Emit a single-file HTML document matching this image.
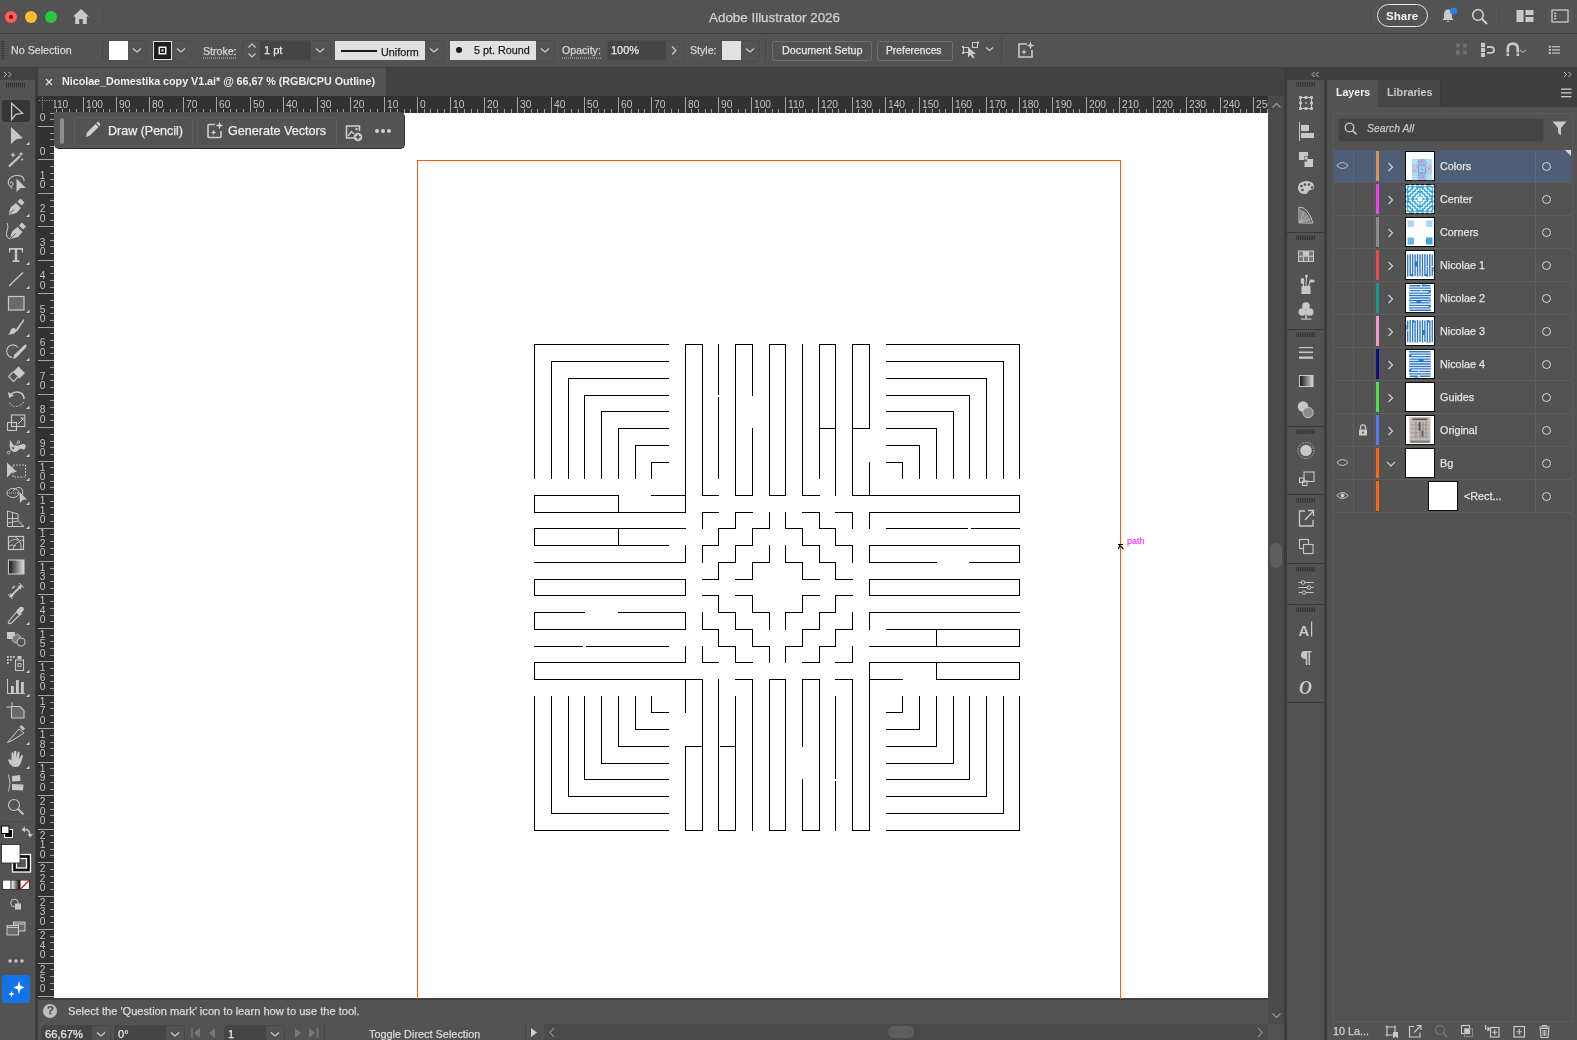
<!DOCTYPE html>
<html><head><meta charset="utf-8"><style>
html,body{margin:0;padding:0;}
body{width:1577px;height:1040px;overflow:hidden;position:relative;background:#535353;font-family:"Liberation Sans",sans-serif;}
body>div,body>svg{position:absolute;will-change:transform;}
.t{white-space:nowrap;line-height:1;-webkit-text-stroke:0.25px currentColor;}
</style></head><body>
<div style="left:0px;top:0px;width:1577px;height:33px;background:#535353;"></div>
<div style="left:0px;top:33px;width:1577px;height:1px;background:#3d3d3d;"></div>
<div style="left:0px;top:34px;width:1577px;height:33px;background:#535353;"></div>
<div style="left:0px;top:67px;width:1577px;height:1px;background:#3d3d3d;"></div>
<div style="left:0px;top:68px;width:35px;height:972px;background:#535353;"></div>
<div style="left:0px;top:68px;width:35px;height:12px;background:#424242;"></div>
<div style="left:35px;top:68px;width:3px;height:972px;background:#3f3f3f;"></div>
<div style="left:38px;top:68px;width:1246px;height:28px;background:#424242;"></div>
<div style="left:38px;top:68px;width:348px;height:28px;background:#535353;"></div>
<div style="left:36px;top:96px;width:1232px;height:17px;background:#323232;"></div>
<div style="left:36px;top:113px;width:18px;height:886px;background:#323232;"></div>
<div style="left:54px;top:113px;width:1214px;height:886px;background:#ffffff;"></div>
<div style="left:1268px;top:96px;width:16px;height:928px;background:#4a4a4a;"></div>
<div style="left:38px;top:998px;width:1230px;height:2px;background:#3f3f3f;"></div>
<div style="left:38px;top:1000px;width:1230px;height:24px;background:#535353;"></div>
<div style="left:544px;top:1024px;width:724px;height:16px;background:#4a4a4a;"></div>
<div style="left:324px;top:1024px;width:1px;height:16px;background:#474747;"></div>
<div style="left:525px;top:1024px;width:1px;height:16px;background:#474747;"></div>
<div style="left:1268px;top:1024px;width:16px;height:16px;background:#535353;"></div>
<div style="left:1284px;top:68px;width:3px;height:972px;background:#3b3b3b;"></div>
<div style="left:1287px;top:68px;width:290px;height:12px;background:#3e3e3e;"></div>
<div style="left:1287px;top:80px;width:37px;height:960px;background:#535353;"></div>
<div style="left:1324px;top:68px;width:3px;height:972px;background:#3b3b3b;"></div>
<div style="left:1327px;top:80px;width:250px;height:960px;background:#535353;"></div>
<div style="left:5px;top:11px;width:12px;height:12px;border-radius:6px;background:#ff5f57;"></div>
<div style="left:25px;top:11px;width:12px;height:12px;border-radius:6px;background:#febc2e;"></div>
<div style="left:45px;top:11px;width:12px;height:12px;border-radius:6px;background:#28c840;"></div>
<div style="left:9px;top:15px;width:4px;height:4px;border-radius:2px;background:#7a0000;"></div>
<svg style="left:72px;top:8px;" width="18" height="17" viewBox="0 0 18 17"><path d="M9 1 L1 8.5 L3.2 8.5 L3.2 16 L7.2 16 L7.2 11 L10.8 11 L10.8 16 L14.8 16 L14.8 8.5 L17 8.5 Z" fill="#c9c9c9"/></svg>
<div style="left:102px;top:7px;width:1px;height:19px;background:#4a4a4a;"></div>
<div class="t" style="left:709px;top:11px;font-size:13.4px;color:#d2d2d2;">Adobe Illustrator 2026</div>
<div style="left:1370px;top:5px;width:1px;height:22px;background:#4a4a4a;"></div>
<div style="left:1377px;top:4px;width:49px;height:21px;border:1.6px solid #e8e8e8;border-radius:12px;"></div>
<div class="t" style="left:1386px;top:10px;font-size:11.6px;color:#f0f0f0;font-weight:700;-webkit-text-stroke:0">Share</div>
<svg style="left:1441px;top:7px;" width="18" height="17" viewBox="0 0 18 17"><path d="M7 2.5 C4 2.5 3 5 3 8 L3 11 L1.5 13 L12.5 13 L11 11 L11 8 C11 5 10 2.5 7 2.5 Z" fill="#c9c9c9"/><path d="M5.5 14 Q7 16.5 8.5 14 Z" fill="#c9c9c9"/><circle cx="12.5" cy="4" r="3.6" fill="#2f7ff0"/></svg>
<svg style="left:1471px;top:8px;" width="18" height="18" viewBox="0 0 18 18"><circle cx="7" cy="7" r="5.3" fill="none" stroke="#c9c9c9" stroke-width="1.7"/><path d="M10.8 10.8 L16 16" stroke="#c9c9c9" stroke-width="2"/></svg>
<div style="left:1499px;top:6px;width:1px;height:20px;background:#4a4a4a;"></div>
<svg style="left:1516px;top:9px;" width="18" height="14" viewBox="0 0 18 14"><rect x="0.5" y="1" width="7" height="12" fill="#c9c9c9"/><rect x="9.5" y="1" width="8" height="5" fill="#c9c9c9"/><rect x="9.5" y="8" width="8" height="5" fill="#c9c9c9"/></svg>
<svg style="left:1551px;top:9px;" width="18" height="14" viewBox="0 0 18 14"><rect x="1" y="1" width="16" height="12" fill="none" stroke="#c9c9c9" stroke-width="1.3"/><rect x="3.2" y="3.5" width="2" height="1.6" fill="#c9c9c9"/><rect x="3.2" y="6.2" width="2" height="1.6" fill="#c9c9c9"/><rect x="3.2" y="8.9" width="2" height="1.6" fill="#c9c9c9"/></svg>
<svg style="left:1px;top:41px;" width="4" height="19" viewBox="0 0 4 19"><rect x="0" y="0.0" width="3.5" height="1" fill="#353535"/><rect x="0" y="2.3" width="3.5" height="1" fill="#353535"/><rect x="0" y="4.6" width="3.5" height="1" fill="#353535"/><rect x="0" y="6.9" width="3.5" height="1" fill="#353535"/><rect x="0" y="9.2" width="3.5" height="1" fill="#353535"/><rect x="0" y="11.5" width="3.5" height="1" fill="#353535"/><rect x="0" y="13.8" width="3.5" height="1" fill="#353535"/><rect x="0" y="16.1" width="3.5" height="1" fill="#353535"/><rect x="0" y="18.4" width="3.5" height="1" fill="#353535"/></svg>
<div class="t" style="left:11px;top:45px;font-size:10.7px;color:#d6d6d6;">No Selection</div>
<div style="left:102px;top:41px;width:1px;height:19px;background:#474747;"></div>
<div style="left:108px;top:40px;width:37px;height:20px;border:1px solid #4c4c4c;border-radius:3px;"></div>
<div style="left:109px;top:41px;width:19px;height:19px;background:#ffffff;"></div>
<svg style="left:132px;top:47px;" width="10" height="7" viewBox="0 0 10 7"><path d="M1 1.5 L5 4.9 L9 1.5" fill="none" stroke="#cfcfcf" stroke-width="1.2"/></svg>
<div style="left:152px;top:40px;width:37px;height:20px;border:1px solid #4c4c4c;border-radius:3px;"></div>
<div style="left:153px;top:41px;width:19px;height:19px;background:#1d1d1d;box-sizing:border-box;border:1px solid #e0e0e0;"></div>
<svg style="left:158px;top:46px;" width="9" height="9" viewBox="0 0 9 9"><rect x="1.25" y="1.25" width="6.5" height="6.5" fill="none" stroke="#f0f0f0" stroke-width="1.5"/><rect x="3.5" y="3.5" width="2" height="2" fill="#f0f0f0"/></svg>
<svg style="left:176px;top:47px;" width="10" height="7" viewBox="0 0 10 7"><path d="M1 1.5 L5 4.9 L9 1.5" fill="none" stroke="#cfcfcf" stroke-width="1.2"/></svg>
<div class="t" style="left:203px;top:46px;font-size:10.6px;color:#d6d6d6;">Stroke:</div>
<svg style="left:203px;top:57px;" width="34" height="2" viewBox="0 0 34 2"><path d="M0 1 L34 1" stroke="#bdbdbd" stroke-width="1" stroke-dasharray="1 1"/></svg>
<div style="left:242px;top:40px;width:87px;height:20px;border:1px solid #4c4c4c;border-radius:3px;"></div>
<div style="left:260px;top:41px;width:51px;height:19px;background:#454545;"></div>
<svg style="left:247px;top:42px;" width="10" height="17" viewBox="0 0 10 17"><path d="M1.5 5.5 L5 2 L8.5 5.5" fill="none" stroke="#cfcfcf" stroke-width="1.1"/><path d="M1.5 11.5 L5 15 L8.5 11.5" fill="none" stroke="#cfcfcf" stroke-width="1.1"/></svg>
<div class="t" style="left:264px;top:45px;font-size:11px;color:#e6e6e6;">1 pt</div>
<svg style="left:315px;top:47px;" width="10" height="7" viewBox="0 0 10 7"><path d="M1 1.5 L5 4.9 L9 1.5" fill="none" stroke="#cfcfcf" stroke-width="1.2"/></svg>
<div style="left:335px;top:41px;width:90px;height:19px;background:#e1e1e1;"></div>
<div style="left:341px;top:50px;width:36px;height:2px;background:#1a1a1a;"></div>
<div class="t" style="left:381px;top:46.5px;font-size:10.8px;color:#202020;">Uniform</div>
<div style="left:425px;top:40px;width:18px;height:20px;border:1px solid #4c4c4c;border-left:none;border-radius:0 3px 3px 0;"></div>
<svg style="left:429px;top:47px;" width="10" height="7" viewBox="0 0 10 7"><path d="M1 1.5 L5 4.9 L9 1.5" fill="none" stroke="#cfcfcf" stroke-width="1.2"/></svg>
<div style="left:450px;top:41px;width:86px;height:19px;background:#e1e1e1;"></div>
<div style="left:456px;top:47px;width:6px;height:6px;border-radius:3px;background:#1a1a1a"></div>
<div class="t" style="left:474px;top:45px;font-size:10.8px;color:#202020;">5 pt. Round</div>
<div style="left:536px;top:40px;width:18px;height:20px;border:1px solid #4c4c4c;border-left:none;border-radius:0 3px 3px 0;"></div>
<svg style="left:540px;top:47px;" width="10" height="7" viewBox="0 0 10 7"><path d="M1 1.5 L5 4.9 L9 1.5" fill="none" stroke="#cfcfcf" stroke-width="1.2"/></svg>
<div class="t" style="left:562px;top:45px;font-size:10.6px;color:#d6d6d6;">Opacity:</div>
<svg style="left:562px;top:57px;" width="39" height="2" viewBox="0 0 39 2"><path d="M0 1 L39 1" stroke="#bdbdbd" stroke-width="1" stroke-dasharray="1 1"/></svg>
<div style="left:607px;top:40px;width:76px;height:20px;border:1px solid #4c4c4c;border-radius:3px;"></div>
<div style="left:608px;top:41px;width:58px;height:19px;background:#454545;"></div>
<div class="t" style="left:611px;top:45px;font-size:11px;color:#e6e6e6;">100%</div>
<svg style="left:670px;top:45px;" width="8" height="11" viewBox="0 0 8 11"><path d="M2 1.5 L6 5.5 L2 9.5" fill="none" stroke="#cfcfcf" stroke-width="1.2"/></svg>
<div class="t" style="left:690px;top:45px;font-size:10.6px;color:#d6d6d6;">Style:</div>
<div style="left:721px;top:40px;width:37px;height:20px;border:1px solid #4c4c4c;border-radius:3px;"></div>
<div style="left:722px;top:41px;width:19px;height:19px;background:#e1e1e1;"></div>
<svg style="left:745px;top:47px;" width="10" height="7" viewBox="0 0 10 7"><path d="M1 1.5 L5 4.9 L9 1.5" fill="none" stroke="#cfcfcf" stroke-width="1.2"/></svg>
<div style="left:765px;top:38px;width:1px;height:24px;background:#474747;"></div>
<div style="left:772px;top:41px;width:98px;height:18px;border:1px solid #6e6e6e;border-radius:2px;"></div>
<div class="t" style="left:782px;top:45px;font-size:10.8px;color:#e6e6e6;">Document Setup</div>
<div style="left:877px;top:41px;width:74px;height:18px;border:1px solid #6e6e6e;border-radius:2px;"></div>
<div class="t" style="left:886px;top:46px;font-size:10.3px;color:#e6e6e6;">Preferences</div>
<svg style="left:961px;top:41px;" width="20" height="18" viewBox="0 0 20 18"><rect x="2.5" y="6.5" width="5" height="5" fill="none" stroke="#c9c9c9" stroke-width="1"/><rect x="1" y="5" width="2" height="2" fill="#c9c9c9"/><rect x="1" y="11" width="2" height="2" fill="#c9c9c9"/><rect x="11.5" y="1.5" width="5" height="5" fill="none" stroke="#c9c9c9" stroke-width="1"/><rect x="16" y="0.5" width="2" height="2" fill="#c9c9c9"/><path d="M7 6 L7 16.5 L9.5 14 L12 17.5 L13.5 16.5 L11.3 13 L15 13 Z" fill="#c9c9c9"/></svg>
<svg style="left:984.5px;top:46px;" width="9.0" height="7" viewBox="0 0 9.0 7"><path d="M1 1.5 L4.5 4.475 L8.0 1.5" fill="none" stroke="#c9c9c9" stroke-width="1.2"/></svg>
<div style="left:1001px;top:36px;width:1px;height:27px;background:#474747;"></div>
<svg style="left:1017px;top:41px;" width="18" height="18" viewBox="0 0 18 18"><path d="M10 3 L2 3 L2 16 L15 16 L15 9" fill="none" stroke="#c9c9c9" stroke-width="1.6"/><path d="M13.5 0.5 L14.6 3.4 L17.5 4.5 L14.6 5.6 L13.5 8.5 L12.4 5.6 L9.5 4.5 L12.4 3.4 Z" fill="#c9c9c9"/><path d="M7 8 L7.8 10.2 L10 11 L7.8 11.8 L7 14 L6.2 11.8 L4 11 L6.2 10.2 Z" fill="#c9c9c9"/></svg>
<svg style="left:1454px;top:41px;" width="16" height="16" viewBox="0 0 16 16"><path d="M7.5 1 V15.5 M0.5 8.5 H15.5" stroke="#5c5c5c" stroke-width="0.8"/><rect x="2" y="2.5" width="4" height="4" fill="#6e6e6e"/><rect x="2" y="9.5" width="4" height="4" fill="#6e6e6e"/><rect x="9" y="2.5" width="4" height="4" fill="#6e6e6e"/><rect x="9" y="9.5" width="4" height="4" fill="#6e6e6e"/></svg>
<svg style="left:1480px;top:42px;" width="17" height="16" viewBox="0 0 17 16"><rect x="1" y="0.8" width="4" height="4.2" fill="#c9c9c9"/><rect x="1" y="5.8" width="4" height="4.2" fill="#c9c9c9"/><rect x="1" y="10.8" width="4" height="4.2" fill="#c9c9c9"/><path d="M7 5 H11 Q14 5 14 7.9 Q14 10.8 11 10.8 H7" fill="none" stroke="#c9c9c9" stroke-width="1.8"/><rect x="6.5" y="6.7" width="2" height="2.3" fill="#535353"/></svg>
<svg style="left:1505px;top:42px;" width="24" height="16" viewBox="0 0 24 16"><path d="M2.8 14 V7 Q2.8 1.6 7.8 1.6 Q12.8 1.6 12.8 7 V14" fill="none" stroke="#c9c9c9" stroke-width="2.6"/><rect x="1" y="10.5" width="3.8" height="0.9" fill="#535353"/><rect x="10.8" y="10.5" width="3.8" height="0.9" fill="#535353"/><path d="M15 7.8 L18 10.5 L21 7.8" fill="none" stroke="#c9c9c9" stroke-width="1"/></svg>
<svg style="left:1548px;top:45px;" width="13" height="10" viewBox="0 0 13 10"><rect x="0.8" y="0.7" width="2" height="2" fill="#c9c9c9"/><rect x="0.8" y="3.9" width="2" height="2" fill="#c9c9c9"/><rect x="0.8" y="7.1" width="2" height="2" fill="#c9c9c9"/><rect x="4" y="1.1" width="8" height="1.2" fill="#c9c9c9"/><rect x="4" y="4.3" width="8" height="1.2" fill="#c9c9c9"/><rect x="4" y="7.5" width="8" height="1.2" fill="#c9c9c9"/></svg>
<svg style="left:45px;top:78px;" width="8" height="8" viewBox="0 0 8 8"><path d="M1 1 L7 7 M7 1 L1 7" stroke="#e0e0e0" stroke-width="1.3"/></svg>
<div class="t" style="left:62px;top:76px;font-size:10.8px;color:#ececec;font-weight:700;letter-spacing:-0.05px;-webkit-text-stroke:0">Nicolae_Domestika copy V1.ai* @ 66,67 % (RGB/CPU Outline)</div>
<svg style="left:3px;top:71px;" width="10" height="7" viewBox="0 0 10 7"><path d="M1 1 L3.5 3.5 L1 6 M5.5 1 L8 3.5 L5.5 6" fill="none" stroke="#bdbdbd" stroke-width="1"/></svg>
<svg style="left:6px;top:83px;" width="20" height="5" viewBox="0 0 20 5"><rect x="0" y="0" width="1" height="4.5" fill="#2f2f2f"/><rect x="2" y="0" width="1" height="4.5" fill="#2f2f2f"/><rect x="4" y="0" width="1" height="4.5" fill="#2f2f2f"/><rect x="6" y="0" width="1" height="4.5" fill="#2f2f2f"/><rect x="8" y="0" width="1" height="4.5" fill="#2f2f2f"/><rect x="10" y="0" width="1" height="4.5" fill="#2f2f2f"/><rect x="12" y="0" width="1" height="4.5" fill="#2f2f2f"/><rect x="14" y="0" width="1" height="4.5" fill="#2f2f2f"/><rect x="16" y="0" width="1" height="4.5" fill="#2f2f2f"/><rect x="18" y="0" width="1" height="4.5" fill="#2f2f2f"/></svg>
<svg style="left:54px;top:96px;overflow:hidden" width="1214" height="17" viewBox="0 0 1214 17"><rect x="-12" y="13" width="1" height="4" fill="#a0a0a0"/><rect x="-5" y="1" width="1" height="16" fill="#a6a6a6"/><text x="-2" y="12" font-size="10.2" fill="#c4c4c4" font-family="Liberation Sans">110</text><rect x="2" y="13" width="1" height="4" fill="#a0a0a0"/><rect x="8" y="13" width="1" height="4" fill="#a0a0a0"/><rect x="15" y="13" width="1" height="4" fill="#a0a0a0"/><rect x="22" y="13" width="1" height="4" fill="#a0a0a0"/><rect x="29" y="1" width="1" height="16" fill="#a6a6a6"/><text x="32" y="12" font-size="10.2" fill="#c4c4c4" font-family="Liberation Sans">100</text><rect x="35" y="13" width="1" height="4" fill="#a0a0a0"/><rect x="42" y="13" width="1" height="4" fill="#a0a0a0"/><rect x="49" y="13" width="1" height="4" fill="#a0a0a0"/><rect x="55" y="13" width="1" height="4" fill="#a0a0a0"/><rect x="62" y="1" width="1" height="16" fill="#a6a6a6"/><text x="65" y="12" font-size="10.2" fill="#c4c4c4" font-family="Liberation Sans">90</text><rect x="69" y="13" width="1" height="4" fill="#a0a0a0"/><rect x="75" y="13" width="1" height="4" fill="#a0a0a0"/><rect x="82" y="13" width="1" height="4" fill="#a0a0a0"/><rect x="89" y="13" width="1" height="4" fill="#a0a0a0"/><rect x="95" y="1" width="1" height="16" fill="#a6a6a6"/><text x="98" y="12" font-size="10.2" fill="#c4c4c4" font-family="Liberation Sans">80</text><rect x="102" y="13" width="1" height="4" fill="#a0a0a0"/><rect x="109" y="13" width="1" height="4" fill="#a0a0a0"/><rect x="116" y="13" width="1" height="4" fill="#a0a0a0"/><rect x="122" y="13" width="1" height="4" fill="#a0a0a0"/><rect x="129" y="1" width="1" height="16" fill="#a6a6a6"/><text x="132" y="12" font-size="10.2" fill="#c4c4c4" font-family="Liberation Sans">70</text><rect x="136" y="13" width="1" height="4" fill="#a0a0a0"/><rect x="142" y="13" width="1" height="4" fill="#a0a0a0"/><rect x="149" y="13" width="1" height="4" fill="#a0a0a0"/><rect x="156" y="13" width="1" height="4" fill="#a0a0a0"/><rect x="162" y="1" width="1" height="16" fill="#a6a6a6"/><text x="165" y="12" font-size="10.2" fill="#c4c4c4" font-family="Liberation Sans">60</text><rect x="169" y="13" width="1" height="4" fill="#a0a0a0"/><rect x="176" y="13" width="1" height="4" fill="#a0a0a0"/><rect x="182" y="13" width="1" height="4" fill="#a0a0a0"/><rect x="189" y="13" width="1" height="4" fill="#a0a0a0"/><rect x="196" y="1" width="1" height="16" fill="#a6a6a6"/><text x="199" y="12" font-size="10.2" fill="#c4c4c4" font-family="Liberation Sans">50</text><rect x="202" y="13" width="1" height="4" fill="#a0a0a0"/><rect x="209" y="13" width="1" height="4" fill="#a0a0a0"/><rect x="216" y="13" width="1" height="4" fill="#a0a0a0"/><rect x="223" y="13" width="1" height="4" fill="#a0a0a0"/><rect x="229" y="1" width="1" height="16" fill="#a6a6a6"/><text x="232" y="12" font-size="10.2" fill="#c4c4c4" font-family="Liberation Sans">40</text><rect x="236" y="13" width="1" height="4" fill="#a0a0a0"/><rect x="243" y="13" width="1" height="4" fill="#a0a0a0"/><rect x="249" y="13" width="1" height="4" fill="#a0a0a0"/><rect x="256" y="13" width="1" height="4" fill="#a0a0a0"/><rect x="263" y="1" width="1" height="16" fill="#a6a6a6"/><text x="266" y="12" font-size="10.2" fill="#c4c4c4" font-family="Liberation Sans">30</text><rect x="269" y="13" width="1" height="4" fill="#a0a0a0"/><rect x="276" y="13" width="1" height="4" fill="#a0a0a0"/><rect x="283" y="13" width="1" height="4" fill="#a0a0a0"/><rect x="289" y="13" width="1" height="4" fill="#a0a0a0"/><rect x="296" y="1" width="1" height="16" fill="#a6a6a6"/><text x="299" y="12" font-size="10.2" fill="#c4c4c4" font-family="Liberation Sans">20</text><rect x="303" y="13" width="1" height="4" fill="#a0a0a0"/><rect x="309" y="13" width="1" height="4" fill="#a0a0a0"/><rect x="316" y="13" width="1" height="4" fill="#a0a0a0"/><rect x="323" y="13" width="1" height="4" fill="#a0a0a0"/><rect x="330" y="1" width="1" height="16" fill="#a6a6a6"/><text x="333" y="12" font-size="10.2" fill="#c4c4c4" font-family="Liberation Sans">10</text><rect x="336" y="13" width="1" height="4" fill="#a0a0a0"/><rect x="343" y="13" width="1" height="4" fill="#a0a0a0"/><rect x="350" y="13" width="1" height="4" fill="#a0a0a0"/><rect x="356" y="13" width="1" height="4" fill="#a0a0a0"/><rect x="363" y="1" width="1" height="16" fill="#a6a6a6"/><text x="366" y="12" font-size="10.2" fill="#c4c4c4" font-family="Liberation Sans">0</text><rect x="370" y="13" width="1" height="4" fill="#a0a0a0"/><rect x="376" y="13" width="1" height="4" fill="#a0a0a0"/><rect x="383" y="13" width="1" height="4" fill="#a0a0a0"/><rect x="390" y="13" width="1" height="4" fill="#a0a0a0"/><rect x="396" y="1" width="1" height="16" fill="#a6a6a6"/><text x="399" y="12" font-size="10.2" fill="#c4c4c4" font-family="Liberation Sans">10</text><rect x="403" y="13" width="1" height="4" fill="#a0a0a0"/><rect x="410" y="13" width="1" height="4" fill="#a0a0a0"/><rect x="417" y="13" width="1" height="4" fill="#a0a0a0"/><rect x="423" y="13" width="1" height="4" fill="#a0a0a0"/><rect x="430" y="1" width="1" height="16" fill="#a6a6a6"/><text x="433" y="12" font-size="10.2" fill="#c4c4c4" font-family="Liberation Sans">20</text><rect x="437" y="13" width="1" height="4" fill="#a0a0a0"/><rect x="443" y="13" width="1" height="4" fill="#a0a0a0"/><rect x="450" y="13" width="1" height="4" fill="#a0a0a0"/><rect x="457" y="13" width="1" height="4" fill="#a0a0a0"/><rect x="463" y="1" width="1" height="16" fill="#a6a6a6"/><text x="466" y="12" font-size="10.2" fill="#c4c4c4" font-family="Liberation Sans">30</text><rect x="470" y="13" width="1" height="4" fill="#a0a0a0"/><rect x="477" y="13" width="1" height="4" fill="#a0a0a0"/><rect x="483" y="13" width="1" height="4" fill="#a0a0a0"/><rect x="490" y="13" width="1" height="4" fill="#a0a0a0"/><rect x="497" y="1" width="1" height="16" fill="#a6a6a6"/><text x="500" y="12" font-size="10.2" fill="#c4c4c4" font-family="Liberation Sans">40</text><rect x="503" y="13" width="1" height="4" fill="#a0a0a0"/><rect x="510" y="13" width="1" height="4" fill="#a0a0a0"/><rect x="517" y="13" width="1" height="4" fill="#a0a0a0"/><rect x="524" y="13" width="1" height="4" fill="#a0a0a0"/><rect x="530" y="1" width="1" height="16" fill="#a6a6a6"/><text x="533" y="12" font-size="10.2" fill="#c4c4c4" font-family="Liberation Sans">50</text><rect x="537" y="13" width="1" height="4" fill="#a0a0a0"/><rect x="544" y="13" width="1" height="4" fill="#a0a0a0"/><rect x="550" y="13" width="1" height="4" fill="#a0a0a0"/><rect x="557" y="13" width="1" height="4" fill="#a0a0a0"/><rect x="564" y="1" width="1" height="16" fill="#a6a6a6"/><text x="567" y="12" font-size="10.2" fill="#c4c4c4" font-family="Liberation Sans">60</text><rect x="570" y="13" width="1" height="4" fill="#a0a0a0"/><rect x="577" y="13" width="1" height="4" fill="#a0a0a0"/><rect x="584" y="13" width="1" height="4" fill="#a0a0a0"/><rect x="590" y="13" width="1" height="4" fill="#a0a0a0"/><rect x="597" y="1" width="1" height="16" fill="#a6a6a6"/><text x="600" y="12" font-size="10.2" fill="#c4c4c4" font-family="Liberation Sans">70</text><rect x="604" y="13" width="1" height="4" fill="#a0a0a0"/><rect x="610" y="13" width="1" height="4" fill="#a0a0a0"/><rect x="617" y="13" width="1" height="4" fill="#a0a0a0"/><rect x="624" y="13" width="1" height="4" fill="#a0a0a0"/><rect x="631" y="1" width="1" height="16" fill="#a6a6a6"/><text x="634" y="12" font-size="10.2" fill="#c4c4c4" font-family="Liberation Sans">80</text><rect x="637" y="13" width="1" height="4" fill="#a0a0a0"/><rect x="644" y="13" width="1" height="4" fill="#a0a0a0"/><rect x="651" y="13" width="1" height="4" fill="#a0a0a0"/><rect x="657" y="13" width="1" height="4" fill="#a0a0a0"/><rect x="664" y="1" width="1" height="16" fill="#a6a6a6"/><text x="667" y="12" font-size="10.2" fill="#c4c4c4" font-family="Liberation Sans">90</text><rect x="671" y="13" width="1" height="4" fill="#a0a0a0"/><rect x="677" y="13" width="1" height="4" fill="#a0a0a0"/><rect x="684" y="13" width="1" height="4" fill="#a0a0a0"/><rect x="691" y="13" width="1" height="4" fill="#a0a0a0"/><rect x="697" y="1" width="1" height="16" fill="#a6a6a6"/><text x="700" y="12" font-size="10.2" fill="#c4c4c4" font-family="Liberation Sans">100</text><rect x="704" y="13" width="1" height="4" fill="#a0a0a0"/><rect x="711" y="13" width="1" height="4" fill="#a0a0a0"/><rect x="718" y="13" width="1" height="4" fill="#a0a0a0"/><rect x="724" y="13" width="1" height="4" fill="#a0a0a0"/><rect x="731" y="1" width="1" height="16" fill="#a6a6a6"/><text x="734" y="12" font-size="10.2" fill="#c4c4c4" font-family="Liberation Sans">110</text><rect x="738" y="13" width="1" height="4" fill="#a0a0a0"/><rect x="744" y="13" width="1" height="4" fill="#a0a0a0"/><rect x="751" y="13" width="1" height="4" fill="#a0a0a0"/><rect x="758" y="13" width="1" height="4" fill="#a0a0a0"/><rect x="764" y="1" width="1" height="16" fill="#a6a6a6"/><text x="767" y="12" font-size="10.2" fill="#c4c4c4" font-family="Liberation Sans">120</text><rect x="771" y="13" width="1" height="4" fill="#a0a0a0"/><rect x="778" y="13" width="1" height="4" fill="#a0a0a0"/><rect x="784" y="13" width="1" height="4" fill="#a0a0a0"/><rect x="791" y="13" width="1" height="4" fill="#a0a0a0"/><rect x="798" y="1" width="1" height="16" fill="#a6a6a6"/><text x="801" y="12" font-size="10.2" fill="#c4c4c4" font-family="Liberation Sans">130</text><rect x="804" y="13" width="1" height="4" fill="#a0a0a0"/><rect x="811" y="13" width="1" height="4" fill="#a0a0a0"/><rect x="818" y="13" width="1" height="4" fill="#a0a0a0"/><rect x="825" y="13" width="1" height="4" fill="#a0a0a0"/><rect x="831" y="1" width="1" height="16" fill="#a6a6a6"/><text x="834" y="12" font-size="10.2" fill="#c4c4c4" font-family="Liberation Sans">140</text><rect x="838" y="13" width="1" height="4" fill="#a0a0a0"/><rect x="845" y="13" width="1" height="4" fill="#a0a0a0"/><rect x="851" y="13" width="1" height="4" fill="#a0a0a0"/><rect x="858" y="13" width="1" height="4" fill="#a0a0a0"/><rect x="865" y="1" width="1" height="16" fill="#a6a6a6"/><text x="868" y="12" font-size="10.2" fill="#c4c4c4" font-family="Liberation Sans">150</text><rect x="871" y="13" width="1" height="4" fill="#a0a0a0"/><rect x="878" y="13" width="1" height="4" fill="#a0a0a0"/><rect x="885" y="13" width="1" height="4" fill="#a0a0a0"/><rect x="891" y="13" width="1" height="4" fill="#a0a0a0"/><rect x="898" y="1" width="1" height="16" fill="#a6a6a6"/><text x="901" y="12" font-size="10.2" fill="#c4c4c4" font-family="Liberation Sans">160</text><rect x="905" y="13" width="1" height="4" fill="#a0a0a0"/><rect x="911" y="13" width="1" height="4" fill="#a0a0a0"/><rect x="918" y="13" width="1" height="4" fill="#a0a0a0"/><rect x="925" y="13" width="1" height="4" fill="#a0a0a0"/><rect x="932" y="1" width="1" height="16" fill="#a6a6a6"/><text x="935" y="12" font-size="10.2" fill="#c4c4c4" font-family="Liberation Sans">170</text><rect x="938" y="13" width="1" height="4" fill="#a0a0a0"/><rect x="945" y="13" width="1" height="4" fill="#a0a0a0"/><rect x="952" y="13" width="1" height="4" fill="#a0a0a0"/><rect x="958" y="13" width="1" height="4" fill="#a0a0a0"/><rect x="965" y="1" width="1" height="16" fill="#a6a6a6"/><text x="968" y="12" font-size="10.2" fill="#c4c4c4" font-family="Liberation Sans">180</text><rect x="972" y="13" width="1" height="4" fill="#a0a0a0"/><rect x="978" y="13" width="1" height="4" fill="#a0a0a0"/><rect x="985" y="13" width="1" height="4" fill="#a0a0a0"/><rect x="992" y="13" width="1" height="4" fill="#a0a0a0"/><rect x="998" y="1" width="1" height="16" fill="#a6a6a6"/><text x="1001" y="12" font-size="10.2" fill="#c4c4c4" font-family="Liberation Sans">190</text><rect x="1005" y="13" width="1" height="4" fill="#a0a0a0"/><rect x="1012" y="13" width="1" height="4" fill="#a0a0a0"/><rect x="1019" y="13" width="1" height="4" fill="#a0a0a0"/><rect x="1025" y="13" width="1" height="4" fill="#a0a0a0"/><rect x="1032" y="1" width="1" height="16" fill="#a6a6a6"/><text x="1035" y="12" font-size="10.2" fill="#c4c4c4" font-family="Liberation Sans">200</text><rect x="1039" y="13" width="1" height="4" fill="#a0a0a0"/><rect x="1045" y="13" width="1" height="4" fill="#a0a0a0"/><rect x="1052" y="13" width="1" height="4" fill="#a0a0a0"/><rect x="1059" y="13" width="1" height="4" fill="#a0a0a0"/><rect x="1065" y="1" width="1" height="16" fill="#a6a6a6"/><text x="1068" y="12" font-size="10.2" fill="#c4c4c4" font-family="Liberation Sans">210</text><rect x="1072" y="13" width="1" height="4" fill="#a0a0a0"/><rect x="1079" y="13" width="1" height="4" fill="#a0a0a0"/><rect x="1085" y="13" width="1" height="4" fill="#a0a0a0"/><rect x="1092" y="13" width="1" height="4" fill="#a0a0a0"/><rect x="1099" y="1" width="1" height="16" fill="#a6a6a6"/><text x="1102" y="12" font-size="10.2" fill="#c4c4c4" font-family="Liberation Sans">220</text><rect x="1105" y="13" width="1" height="4" fill="#a0a0a0"/><rect x="1112" y="13" width="1" height="4" fill="#a0a0a0"/><rect x="1119" y="13" width="1" height="4" fill="#a0a0a0"/><rect x="1126" y="13" width="1" height="4" fill="#a0a0a0"/><rect x="1132" y="1" width="1" height="16" fill="#a6a6a6"/><text x="1135" y="12" font-size="10.2" fill="#c4c4c4" font-family="Liberation Sans">230</text><rect x="1139" y="13" width="1" height="4" fill="#a0a0a0"/><rect x="1146" y="13" width="1" height="4" fill="#a0a0a0"/><rect x="1152" y="13" width="1" height="4" fill="#a0a0a0"/><rect x="1159" y="13" width="1" height="4" fill="#a0a0a0"/><rect x="1166" y="1" width="1" height="16" fill="#a6a6a6"/><text x="1169" y="12" font-size="10.2" fill="#c4c4c4" font-family="Liberation Sans">240</text><rect x="1172" y="13" width="1" height="4" fill="#a0a0a0"/><rect x="1179" y="13" width="1" height="4" fill="#a0a0a0"/><rect x="1186" y="13" width="1" height="4" fill="#a0a0a0"/><rect x="1192" y="13" width="1" height="4" fill="#a0a0a0"/><rect x="1199" y="1" width="1" height="16" fill="#a6a6a6"/><text x="1202" y="12" font-size="10.2" fill="#c4c4c4" font-family="Liberation Sans">250</text><rect x="1206" y="13" width="1" height="4" fill="#a0a0a0"/><rect x="1213" y="13" width="1" height="4" fill="#a0a0a0"/></svg>
<svg style="left:36px;top:113px;overflow:hidden" width="18" height="885" viewBox="0 0 18 885"><rect x="2" y="-21" width="16" height="1" fill="#a6a6a6"/><text x="6.5" y="-34.53" font-size="10.2" fill="#c4c4c4" text-anchor="middle" font-family="Liberation Sans">2</text><text x="6.5" y="-25.03" font-size="10.2" fill="#c4c4c4" text-anchor="middle" font-family="Liberation Sans">0</text><rect x="14" y="-14" width="4" height="1" fill="#a0a0a0"/><rect x="14" y="-7" width="4" height="1" fill="#a0a0a0"/><rect x="14" y="0" width="4" height="1" fill="#a0a0a0"/><rect x="14" y="6" width="4" height="1" fill="#a0a0a0"/><rect x="2" y="13" width="16" height="1" fill="#a6a6a6"/><text x="6.5" y="-1.06" font-size="10.2" fill="#c4c4c4" text-anchor="middle" font-family="Liberation Sans">1</text><text x="6.5" y="8.44" font-size="10.2" fill="#c4c4c4" text-anchor="middle" font-family="Liberation Sans">0</text><rect x="14" y="20" width="4" height="1" fill="#a0a0a0"/><rect x="14" y="26" width="4" height="1" fill="#a0a0a0"/><rect x="14" y="33" width="4" height="1" fill="#a0a0a0"/><rect x="14" y="40" width="4" height="1" fill="#a0a0a0"/><rect x="2" y="46" width="16" height="1" fill="#a6a6a6"/><text x="6.5" y="41.90" font-size="10.2" fill="#c4c4c4" text-anchor="middle" font-family="Liberation Sans">0</text><rect x="14" y="53" width="4" height="1" fill="#a0a0a0"/><rect x="14" y="60" width="4" height="1" fill="#a0a0a0"/><rect x="14" y="66" width="4" height="1" fill="#a0a0a0"/><rect x="14" y="73" width="4" height="1" fill="#a0a0a0"/><rect x="2" y="80" width="16" height="1" fill="#a6a6a6"/><text x="6.5" y="65.87" font-size="10.2" fill="#c4c4c4" text-anchor="middle" font-family="Liberation Sans">1</text><text x="6.5" y="75.37" font-size="10.2" fill="#c4c4c4" text-anchor="middle" font-family="Liberation Sans">0</text><rect x="14" y="87" width="4" height="1" fill="#a0a0a0"/><rect x="14" y="93" width="4" height="1" fill="#a0a0a0"/><rect x="14" y="100" width="4" height="1" fill="#a0a0a0"/><rect x="14" y="107" width="4" height="1" fill="#a0a0a0"/><rect x="2" y="113" width="16" height="1" fill="#a6a6a6"/><text x="6.5" y="99.33" font-size="10.2" fill="#c4c4c4" text-anchor="middle" font-family="Liberation Sans">2</text><text x="6.5" y="108.83" font-size="10.2" fill="#c4c4c4" text-anchor="middle" font-family="Liberation Sans">0</text><rect x="14" y="120" width="4" height="1" fill="#a0a0a0"/><rect x="14" y="127" width="4" height="1" fill="#a0a0a0"/><rect x="14" y="133" width="4" height="1" fill="#a0a0a0"/><rect x="14" y="140" width="4" height="1" fill="#a0a0a0"/><rect x="2" y="147" width="16" height="1" fill="#a6a6a6"/><text x="6.5" y="132.80" font-size="10.2" fill="#c4c4c4" text-anchor="middle" font-family="Liberation Sans">3</text><text x="6.5" y="142.30" font-size="10.2" fill="#c4c4c4" text-anchor="middle" font-family="Liberation Sans">0</text><rect x="14" y="153" width="4" height="1" fill="#a0a0a0"/><rect x="14" y="160" width="4" height="1" fill="#a0a0a0"/><rect x="14" y="167" width="4" height="1" fill="#a0a0a0"/><rect x="14" y="174" width="4" height="1" fill="#a0a0a0"/><rect x="2" y="180" width="16" height="1" fill="#a6a6a6"/><text x="6.5" y="166.26" font-size="10.2" fill="#c4c4c4" text-anchor="middle" font-family="Liberation Sans">4</text><text x="6.5" y="175.76" font-size="10.2" fill="#c4c4c4" text-anchor="middle" font-family="Liberation Sans">0</text><rect x="14" y="187" width="4" height="1" fill="#a0a0a0"/><rect x="14" y="194" width="4" height="1" fill="#a0a0a0"/><rect x="14" y="200" width="4" height="1" fill="#a0a0a0"/><rect x="14" y="207" width="4" height="1" fill="#a0a0a0"/><rect x="2" y="214" width="16" height="1" fill="#a6a6a6"/><text x="6.5" y="199.73" font-size="10.2" fill="#c4c4c4" text-anchor="middle" font-family="Liberation Sans">5</text><text x="6.5" y="209.23" font-size="10.2" fill="#c4c4c4" text-anchor="middle" font-family="Liberation Sans">0</text><rect x="14" y="220" width="4" height="1" fill="#a0a0a0"/><rect x="14" y="227" width="4" height="1" fill="#a0a0a0"/><rect x="14" y="234" width="4" height="1" fill="#a0a0a0"/><rect x="14" y="240" width="4" height="1" fill="#a0a0a0"/><rect x="2" y="247" width="16" height="1" fill="#a6a6a6"/><text x="6.5" y="233.19" font-size="10.2" fill="#c4c4c4" text-anchor="middle" font-family="Liberation Sans">6</text><text x="6.5" y="242.69" font-size="10.2" fill="#c4c4c4" text-anchor="middle" font-family="Liberation Sans">0</text><rect x="14" y="254" width="4" height="1" fill="#a0a0a0"/><rect x="14" y="261" width="4" height="1" fill="#a0a0a0"/><rect x="14" y="267" width="4" height="1" fill="#a0a0a0"/><rect x="14" y="274" width="4" height="1" fill="#a0a0a0"/><rect x="2" y="281" width="16" height="1" fill="#a6a6a6"/><text x="6.5" y="266.65" font-size="10.2" fill="#c4c4c4" text-anchor="middle" font-family="Liberation Sans">7</text><text x="6.5" y="276.15" font-size="10.2" fill="#c4c4c4" text-anchor="middle" font-family="Liberation Sans">0</text><rect x="14" y="287" width="4" height="1" fill="#a0a0a0"/><rect x="14" y="294" width="4" height="1" fill="#a0a0a0"/><rect x="14" y="301" width="4" height="1" fill="#a0a0a0"/><rect x="14" y="307" width="4" height="1" fill="#a0a0a0"/><rect x="2" y="314" width="16" height="1" fill="#a6a6a6"/><text x="6.5" y="300.12" font-size="10.2" fill="#c4c4c4" text-anchor="middle" font-family="Liberation Sans">8</text><text x="6.5" y="309.62" font-size="10.2" fill="#c4c4c4" text-anchor="middle" font-family="Liberation Sans">0</text><rect x="14" y="321" width="4" height="1" fill="#a0a0a0"/><rect x="14" y="328" width="4" height="1" fill="#a0a0a0"/><rect x="14" y="334" width="4" height="1" fill="#a0a0a0"/><rect x="14" y="341" width="4" height="1" fill="#a0a0a0"/><rect x="2" y="348" width="16" height="1" fill="#a6a6a6"/><text x="6.5" y="333.59" font-size="10.2" fill="#c4c4c4" text-anchor="middle" font-family="Liberation Sans">9</text><text x="6.5" y="343.09" font-size="10.2" fill="#c4c4c4" text-anchor="middle" font-family="Liberation Sans">0</text><rect x="14" y="354" width="4" height="1" fill="#a0a0a0"/><rect x="14" y="361" width="4" height="1" fill="#a0a0a0"/><rect x="14" y="368" width="4" height="1" fill="#a0a0a0"/><rect x="14" y="374" width="4" height="1" fill="#a0a0a0"/><rect x="2" y="381" width="16" height="1" fill="#a6a6a6"/><text x="6.5" y="357.55" font-size="10.2" fill="#c4c4c4" text-anchor="middle" font-family="Liberation Sans">1</text><text x="6.5" y="367.05" font-size="10.2" fill="#c4c4c4" text-anchor="middle" font-family="Liberation Sans">0</text><text x="6.5" y="376.55" font-size="10.2" fill="#c4c4c4" text-anchor="middle" font-family="Liberation Sans">0</text><rect x="14" y="388" width="4" height="1" fill="#a0a0a0"/><rect x="14" y="394" width="4" height="1" fill="#a0a0a0"/><rect x="14" y="401" width="4" height="1" fill="#a0a0a0"/><rect x="14" y="408" width="4" height="1" fill="#a0a0a0"/><rect x="2" y="415" width="16" height="1" fill="#a6a6a6"/><text x="6.5" y="391.01" font-size="10.2" fill="#c4c4c4" text-anchor="middle" font-family="Liberation Sans">1</text><text x="6.5" y="400.51" font-size="10.2" fill="#c4c4c4" text-anchor="middle" font-family="Liberation Sans">1</text><text x="6.5" y="410.01" font-size="10.2" fill="#c4c4c4" text-anchor="middle" font-family="Liberation Sans">0</text><rect x="14" y="421" width="4" height="1" fill="#a0a0a0"/><rect x="14" y="428" width="4" height="1" fill="#a0a0a0"/><rect x="14" y="435" width="4" height="1" fill="#a0a0a0"/><rect x="14" y="441" width="4" height="1" fill="#a0a0a0"/><rect x="2" y="448" width="16" height="1" fill="#a6a6a6"/><text x="6.5" y="424.48" font-size="10.2" fill="#c4c4c4" text-anchor="middle" font-family="Liberation Sans">1</text><text x="6.5" y="433.98" font-size="10.2" fill="#c4c4c4" text-anchor="middle" font-family="Liberation Sans">2</text><text x="6.5" y="443.48" font-size="10.2" fill="#c4c4c4" text-anchor="middle" font-family="Liberation Sans">0</text><rect x="14" y="455" width="4" height="1" fill="#a0a0a0"/><rect x="14" y="461" width="4" height="1" fill="#a0a0a0"/><rect x="14" y="468" width="4" height="1" fill="#a0a0a0"/><rect x="14" y="475" width="4" height="1" fill="#a0a0a0"/><rect x="2" y="481" width="16" height="1" fill="#a6a6a6"/><text x="6.5" y="457.94" font-size="10.2" fill="#c4c4c4" text-anchor="middle" font-family="Liberation Sans">1</text><text x="6.5" y="467.44" font-size="10.2" fill="#c4c4c4" text-anchor="middle" font-family="Liberation Sans">3</text><text x="6.5" y="476.94" font-size="10.2" fill="#c4c4c4" text-anchor="middle" font-family="Liberation Sans">0</text><rect x="14" y="488" width="4" height="1" fill="#a0a0a0"/><rect x="14" y="495" width="4" height="1" fill="#a0a0a0"/><rect x="14" y="502" width="4" height="1" fill="#a0a0a0"/><rect x="14" y="508" width="4" height="1" fill="#a0a0a0"/><rect x="2" y="515" width="16" height="1" fill="#a6a6a6"/><text x="6.5" y="491.41" font-size="10.2" fill="#c4c4c4" text-anchor="middle" font-family="Liberation Sans">1</text><text x="6.5" y="500.91" font-size="10.2" fill="#c4c4c4" text-anchor="middle" font-family="Liberation Sans">4</text><text x="6.5" y="510.41" font-size="10.2" fill="#c4c4c4" text-anchor="middle" font-family="Liberation Sans">0</text><rect x="14" y="522" width="4" height="1" fill="#a0a0a0"/><rect x="14" y="528" width="4" height="1" fill="#a0a0a0"/><rect x="14" y="535" width="4" height="1" fill="#a0a0a0"/><rect x="14" y="542" width="4" height="1" fill="#a0a0a0"/><rect x="2" y="548" width="16" height="1" fill="#a6a6a6"/><text x="6.5" y="524.88" font-size="10.2" fill="#c4c4c4" text-anchor="middle" font-family="Liberation Sans">1</text><text x="6.5" y="534.38" font-size="10.2" fill="#c4c4c4" text-anchor="middle" font-family="Liberation Sans">5</text><text x="6.5" y="543.88" font-size="10.2" fill="#c4c4c4" text-anchor="middle" font-family="Liberation Sans">0</text><rect x="14" y="555" width="4" height="1" fill="#a0a0a0"/><rect x="14" y="562" width="4" height="1" fill="#a0a0a0"/><rect x="14" y="568" width="4" height="1" fill="#a0a0a0"/><rect x="14" y="575" width="4" height="1" fill="#a0a0a0"/><rect x="2" y="582" width="16" height="1" fill="#a6a6a6"/><text x="6.5" y="558.34" font-size="10.2" fill="#c4c4c4" text-anchor="middle" font-family="Liberation Sans">1</text><text x="6.5" y="567.84" font-size="10.2" fill="#c4c4c4" text-anchor="middle" font-family="Liberation Sans">6</text><text x="6.5" y="577.34" font-size="10.2" fill="#c4c4c4" text-anchor="middle" font-family="Liberation Sans">0</text><rect x="14" y="589" width="4" height="1" fill="#a0a0a0"/><rect x="14" y="595" width="4" height="1" fill="#a0a0a0"/><rect x="14" y="602" width="4" height="1" fill="#a0a0a0"/><rect x="14" y="609" width="4" height="1" fill="#a0a0a0"/><rect x="2" y="615" width="16" height="1" fill="#a6a6a6"/><text x="6.5" y="591.80" font-size="10.2" fill="#c4c4c4" text-anchor="middle" font-family="Liberation Sans">1</text><text x="6.5" y="601.30" font-size="10.2" fill="#c4c4c4" text-anchor="middle" font-family="Liberation Sans">7</text><text x="6.5" y="610.80" font-size="10.2" fill="#c4c4c4" text-anchor="middle" font-family="Liberation Sans">0</text><rect x="14" y="622" width="4" height="1" fill="#a0a0a0"/><rect x="14" y="629" width="4" height="1" fill="#a0a0a0"/><rect x="14" y="635" width="4" height="1" fill="#a0a0a0"/><rect x="14" y="642" width="4" height="1" fill="#a0a0a0"/><rect x="2" y="649" width="16" height="1" fill="#a6a6a6"/><text x="6.5" y="625.27" font-size="10.2" fill="#c4c4c4" text-anchor="middle" font-family="Liberation Sans">1</text><text x="6.5" y="634.77" font-size="10.2" fill="#c4c4c4" text-anchor="middle" font-family="Liberation Sans">8</text><text x="6.5" y="644.27" font-size="10.2" fill="#c4c4c4" text-anchor="middle" font-family="Liberation Sans">0</text><rect x="14" y="655" width="4" height="1" fill="#a0a0a0"/><rect x="14" y="662" width="4" height="1" fill="#a0a0a0"/><rect x="14" y="669" width="4" height="1" fill="#a0a0a0"/><rect x="14" y="676" width="4" height="1" fill="#a0a0a0"/><rect x="2" y="682" width="16" height="1" fill="#a6a6a6"/><text x="6.5" y="658.73" font-size="10.2" fill="#c4c4c4" text-anchor="middle" font-family="Liberation Sans">1</text><text x="6.5" y="668.23" font-size="10.2" fill="#c4c4c4" text-anchor="middle" font-family="Liberation Sans">9</text><text x="6.5" y="677.73" font-size="10.2" fill="#c4c4c4" text-anchor="middle" font-family="Liberation Sans">0</text><rect x="14" y="689" width="4" height="1" fill="#a0a0a0"/><rect x="14" y="696" width="4" height="1" fill="#a0a0a0"/><rect x="14" y="702" width="4" height="1" fill="#a0a0a0"/><rect x="14" y="709" width="4" height="1" fill="#a0a0a0"/><rect x="2" y="716" width="16" height="1" fill="#a6a6a6"/><text x="6.5" y="692.20" font-size="10.2" fill="#c4c4c4" text-anchor="middle" font-family="Liberation Sans">2</text><text x="6.5" y="701.70" font-size="10.2" fill="#c4c4c4" text-anchor="middle" font-family="Liberation Sans">0</text><text x="6.5" y="711.20" font-size="10.2" fill="#c4c4c4" text-anchor="middle" font-family="Liberation Sans">0</text><rect x="14" y="722" width="4" height="1" fill="#a0a0a0"/><rect x="14" y="729" width="4" height="1" fill="#a0a0a0"/><rect x="14" y="736" width="4" height="1" fill="#a0a0a0"/><rect x="14" y="742" width="4" height="1" fill="#a0a0a0"/><rect x="2" y="749" width="16" height="1" fill="#a6a6a6"/><text x="6.5" y="725.66" font-size="10.2" fill="#c4c4c4" text-anchor="middle" font-family="Liberation Sans">2</text><text x="6.5" y="735.16" font-size="10.2" fill="#c4c4c4" text-anchor="middle" font-family="Liberation Sans">1</text><text x="6.5" y="744.66" font-size="10.2" fill="#c4c4c4" text-anchor="middle" font-family="Liberation Sans">0</text><rect x="14" y="756" width="4" height="1" fill="#a0a0a0"/><rect x="14" y="763" width="4" height="1" fill="#a0a0a0"/><rect x="14" y="769" width="4" height="1" fill="#a0a0a0"/><rect x="14" y="776" width="4" height="1" fill="#a0a0a0"/><rect x="2" y="783" width="16" height="1" fill="#a6a6a6"/><text x="6.5" y="759.13" font-size="10.2" fill="#c4c4c4" text-anchor="middle" font-family="Liberation Sans">2</text><text x="6.5" y="768.63" font-size="10.2" fill="#c4c4c4" text-anchor="middle" font-family="Liberation Sans">2</text><text x="6.5" y="778.13" font-size="10.2" fill="#c4c4c4" text-anchor="middle" font-family="Liberation Sans">0</text><rect x="14" y="789" width="4" height="1" fill="#a0a0a0"/><rect x="14" y="796" width="4" height="1" fill="#a0a0a0"/><rect x="14" y="803" width="4" height="1" fill="#a0a0a0"/><rect x="14" y="809" width="4" height="1" fill="#a0a0a0"/><rect x="2" y="816" width="16" height="1" fill="#a6a6a6"/><text x="6.5" y="792.59" font-size="10.2" fill="#c4c4c4" text-anchor="middle" font-family="Liberation Sans">2</text><text x="6.5" y="802.09" font-size="10.2" fill="#c4c4c4" text-anchor="middle" font-family="Liberation Sans">3</text><text x="6.5" y="811.59" font-size="10.2" fill="#c4c4c4" text-anchor="middle" font-family="Liberation Sans">0</text><rect x="14" y="823" width="4" height="1" fill="#a0a0a0"/><rect x="14" y="829" width="4" height="1" fill="#a0a0a0"/><rect x="14" y="836" width="4" height="1" fill="#a0a0a0"/><rect x="14" y="843" width="4" height="1" fill="#a0a0a0"/><rect x="2" y="850" width="16" height="1" fill="#a6a6a6"/><text x="6.5" y="826.06" font-size="10.2" fill="#c4c4c4" text-anchor="middle" font-family="Liberation Sans">2</text><text x="6.5" y="835.56" font-size="10.2" fill="#c4c4c4" text-anchor="middle" font-family="Liberation Sans">4</text><text x="6.5" y="845.06" font-size="10.2" fill="#c4c4c4" text-anchor="middle" font-family="Liberation Sans">0</text><rect x="14" y="856" width="4" height="1" fill="#a0a0a0"/><rect x="14" y="863" width="4" height="1" fill="#a0a0a0"/><rect x="14" y="870" width="4" height="1" fill="#a0a0a0"/><rect x="14" y="876" width="4" height="1" fill="#a0a0a0"/><rect x="2" y="883" width="16" height="1" fill="#a6a6a6"/><text x="6.5" y="859.52" font-size="10.2" fill="#c4c4c4" text-anchor="middle" font-family="Liberation Sans">2</text><text x="6.5" y="869.02" font-size="10.2" fill="#c4c4c4" text-anchor="middle" font-family="Liberation Sans">5</text><text x="6.5" y="878.52" font-size="10.2" fill="#c4c4c4" text-anchor="middle" font-family="Liberation Sans">0</text><rect x="14" y="890" width="4" height="1" fill="#a0a0a0"/><rect x="14" y="896" width="4" height="1" fill="#a0a0a0"/><rect x="14" y="903" width="4" height="1" fill="#a0a0a0"/><rect x="14" y="910" width="4" height="1" fill="#a0a0a0"/><rect x="2" y="916" width="16" height="1" fill="#a6a6a6"/><text x="6.5" y="892.99" font-size="10.2" fill="#c4c4c4" text-anchor="middle" font-family="Liberation Sans">2</text><text x="6.5" y="902.49" font-size="10.2" fill="#c4c4c4" text-anchor="middle" font-family="Liberation Sans">6</text><text x="6.5" y="911.99" font-size="10.2" fill="#c4c4c4" text-anchor="middle" font-family="Liberation Sans">0</text><rect x="14" y="923" width="4" height="1" fill="#a0a0a0"/></svg>
<svg style="left:36px;top:96px;" width="18" height="17" viewBox="0 0 18 17"><path d="M3 4.5 L17 4.5" stroke="#9a9a9a" stroke-width="1" stroke-dasharray="1 1.5"/><path d="M6.5 1 L6.5 16" stroke="#9a9a9a" stroke-width="1" stroke-dasharray="1 1.5"/></svg>
<div style="left:417px;top:160px;width:702px;height:838px;border:1px solid #ff5a0a;border-bottom:none;"></div>
<svg style="left:520px;top:330px;" width="520" height="520" viewBox="0 0 520 520"><path d="M14.5 14.5V148.5M14.5 14.5H148.5M31.5 31.5V148.5M31.5 31.5H148.5M48.5 48.5V148.5M48.5 48.5H148.5M64.5 65.5V148.5M64.5 65.5H148.5M81.5 81.5V148.5M81.5 81.5H148.5M98.5 98.5V148.5M98.5 98.5H148.5M115.5 115.5V148.5M115.5 115.5H148.5M131.5 132.5V148.5M131.5 132.5H148.5M14.5 165.5H98.5M131.5 165.5H165.5M14.5 165.5V182.5M98.5 165.5V182.5M14.5 182.5H165.5M14.5 198.5H165.5M14.5 198.5V215.5M98.5 198.5V215.5M14.5 215.5H148.5M165.5 215.5V232.5M14.5 232.5H165.5M14.5 249.5H165.5M14.5 249.5V265.5M165.5 249.5V265.5M14.5 265.5H165.5M14.5 282.5H64.5M98.5 282.5H165.5M14.5 282.5V299.5M165.5 282.5V299.5M14.5 299.5H165.5M165.5 316.5V332.5M14.5 332.5H165.5M14.5 332.5V349.5M14.5 349.5H182.5M14.5 366.5V500.5M14.5 500.5H148.5M31.5 366.5V483.5M31.5 483.5H148.5M48.5 366.5V466.5M48.5 466.5H148.5M64.5 366.5V449.5M64.5 449.5H148.5M81.5 366.5V433.5M81.5 433.5H148.5M98.5 366.5V416.5M98.5 416.5H148.5M115.5 366.5V399.5M115.5 399.5H148.5M131.5 366.5V382.5M131.5 382.5H148.5M165.5 349.5V382.5M182.5 349.5V500.5M165.5 416.5H182.5M165.5 416.5V500.5M165.5 500.5H182.5M165.5 14.5H182.5M165.5 14.5V182.5M182.5 14.5V165.5M182.5 165.5H198.5M215.5 14.5H232.5M215.5 14.5V165.5M215.5 165.5H232.5M232.5 14.5V65.5M232.5 98.5V165.5M249.5 14.5H265.5M249.5 14.5V165.5M265.5 14.5V165.5M249.5 165.5H265.5M282.5 14.5V165.5M282.5 165.5H299.5M299.5 14.5V148.5M299.5 14.5H315.5M315.5 14.5V165.5M299.5 98.5H315.5M332.5 14.5V165.5M332.5 14.5H349.5M349.5 14.5V98.5M332.5 98.5H349.5M349.5 132.5V165.5M332.5 165.5H499.5M366.5 14.5H499.5M499.5 14.5V148.5M366.5 31.5H483.5M483.5 31.5V148.5M366.5 48.5H466.5M466.5 48.5V148.5M366.5 65.5H449.5M449.5 65.5V148.5M366.5 81.5H433.5M433.5 81.5V148.5M366.5 98.5H416.5M416.5 98.5V148.5M366.5 115.5H399.5M399.5 115.5V148.5M366.5 132.5H382.5M382.5 132.5V148.5M499.5 165.5V182.5M349.5 182.5H499.5M349.5 182.5V198.5M182.5 182.5H198.5M182.5 182.5V198.5M215.5 182.5H232.5M215.5 182.5V198.5M249.5 182.5V198.5M265.5 182.5V198.5M282.5 182.5H299.5M299.5 182.5V198.5M315.5 182.5H332.5M332.5 182.5V198.5M198.5 198.5H215.5M198.5 198.5V215.5M182.5 215.5H198.5M182.5 215.5V232.5M232.5 198.5H249.5M232.5 198.5V215.5M215.5 215.5H232.5M215.5 215.5V232.5M198.5 232.5H215.5M198.5 232.5V249.5M182.5 249.5H198.5M249.5 215.5V232.5M232.5 232.5H249.5M232.5 232.5V249.5M215.5 249.5H232.5M265.5 198.5H282.5M282.5 198.5V215.5M282.5 215.5H299.5M299.5 215.5V232.5M299.5 232.5H315.5M315.5 232.5V249.5M315.5 249.5H332.5M299.5 198.5H315.5M315.5 198.5V215.5M315.5 215.5H332.5M332.5 215.5V232.5M265.5 215.5V232.5M265.5 232.5H282.5M282.5 232.5V249.5M282.5 249.5H299.5M182.5 265.5H198.5M198.5 265.5V282.5M198.5 282.5H215.5M215.5 282.5V299.5M215.5 299.5H232.5M232.5 299.5V316.5M232.5 316.5H249.5M249.5 316.5V332.5M215.5 265.5H232.5M232.5 265.5V282.5M232.5 282.5H249.5M249.5 282.5V299.5M182.5 282.5V299.5M182.5 299.5H198.5M198.5 299.5V316.5M198.5 316.5H215.5M215.5 316.5V332.5M215.5 332.5H232.5M182.5 316.5V332.5M182.5 332.5H198.5M282.5 265.5H299.5M282.5 265.5V282.5M265.5 282.5H282.5M265.5 282.5V299.5M315.5 265.5H332.5M315.5 265.5V282.5M299.5 282.5H315.5M299.5 282.5V299.5M282.5 299.5H299.5M282.5 299.5V316.5M265.5 316.5H282.5M265.5 316.5V332.5M332.5 282.5V299.5M315.5 299.5H332.5M315.5 299.5V316.5M299.5 316.5H315.5M299.5 316.5V332.5M282.5 332.5H299.5M332.5 316.5V332.5M315.5 332.5H332.5M349.5 215.5H499.5M349.5 215.5V232.5M499.5 215.5V232.5M349.5 232.5H416.5M449.5 232.5H499.5M349.5 249.5H499.5M349.5 249.5V265.5M499.5 249.5V265.5M349.5 265.5H499.5M349.5 282.5H499.5M349.5 282.5V299.5M366.5 299.5H499.5M416.5 299.5V316.5M499.5 299.5V316.5M349.5 316.5H499.5M198.5 349.5V500.5M198.5 500.5H215.5M215.5 366.5V500.5M215.5 349.5H232.5M232.5 349.5V500.5M249.5 349.5V500.5M249.5 349.5H265.5M265.5 349.5V500.5M249.5 500.5H265.5M282.5 349.5V416.5M282.5 449.5V500.5M282.5 349.5H299.5M299.5 349.5V500.5M282.5 500.5H299.5M315.5 349.5H332.5M332.5 349.5V500.5M332.5 500.5H349.5M349.5 332.5V500.5M349.5 332.5H499.5M416.5 332.5V349.5M416.5 349.5H499.5M499.5 332.5V349.5M349.5 349.5H382.5M499.5 366.5V500.5M366.5 500.5H499.5M483.5 366.5V483.5M366.5 483.5H483.5M466.5 366.5V466.5M366.5 466.5H466.5M449.5 366.5V449.5M366.5 449.5H449.5M433.5 366.5V433.5M366.5 433.5H433.5M416.5 366.5V416.5M366.5 416.5H416.5M399.5 366.5V399.5M366.5 399.5H399.5M382.5 366.5V382.5M366.5 382.5H382.5M200.5 416.5H215.5M14.5 316.5H62.5M66.5 316.5H148.5M198.5 14.5V64.0M198.5 67.0V148.5M366.5 198.5H447.0M451.0 198.5H499.5M315.5 366.5V448.0M315.5 451.0V500.5" fill="none" stroke="#000" stroke-width="1" stroke-linecap="square" shape-rendering="crispEdges"/></svg>
<div class="t" style="left:1127px;top:537px;font-size:9px;color:#ff40ff;">path</div>
<svg style="left:1116px;top:542px;" width="9" height="9" viewBox="0 0 9 9"><path d="M2 2.5 L7 2.5 M4 2.5 L2.5 7 M4.5 4 L7.5 7" stroke="#000" stroke-width="1.1" fill="none"/></svg>
<div style="left:54px;top:112px;width:350px;height:36px;background:#535353;border:1px solid #2f2f2f;border-top:none;border-left:none;border-radius:0 5px 5px 5px;"></div>
<div style="left:60px;top:118px;width:4px;height:26px;background:#8c8c8c;border-radius:2px;"></div>
<div style="left:74px;top:117px;width:117px;height:27px;border:1px solid #5f5f5f;border-radius:3px;"></div>
<svg style="left:84px;top:121px;" width="16" height="18" viewBox="0 0 16 18"><path d="M2 16 L3 11.5 L11.5 3 L14.5 6 L6 14.5 Z" fill="#cfcfcf"/><path d="M12.3 2.2 L13.3 1.2 Q14 0.5 14.8 1.3 L16.2 2.7 Q17 3.5 16.3 4.2 L15.3 5.2 Z" fill="#cfcfcf"/></svg>
<div class="t" style="left:108px;top:125px;font-size:12.5px;color:#ececec;">Draw (Pencil)</div>
<div style="left:197px;top:117px;width:138px;height:27px;border:1px solid #5f5f5f;border-radius:3px;"></div>
<svg style="left:206px;top:121px;" width="18" height="18" viewBox="0 0 18 18"><path d="M9 3.5 L3 3.5 Q2 3.5 2 4.5 L2 15.5 Q2 16.5 3 16.5 L14 16.5 Q15 16.5 15 15.5 L15 10" fill="none" stroke="#cfcfcf" stroke-width="1.6"/><path d="M13.5 0.5 L14.5 3.5 L17.5 4.5 L14.5 5.5 L13.5 8.5 L12.5 5.5 L9.5 4.5 L12.5 3.5 Z" fill="#cfcfcf"/><path d="M7.5 8.5 L8.3 10.7 L10.5 11.5 L8.3 12.3 L7.5 14.5 L6.7 12.3 L4.5 11.5 L6.7 10.7 Z" fill="#cfcfcf"/></svg>
<div class="t" style="left:228px;top:125px;font-size:12.6px;color:#ececec;">Generate Vectors</div>
<svg style="left:345px;top:124px;" width="18" height="18" viewBox="0 0 18 18"><path d="M9 14 L1.5 14 L1.5 2 L14.5 2 L14.5 7" fill="none" stroke="#cfcfcf" stroke-width="1.5"/><path d="M3 12 L6.5 7.5 L9 10" fill="none" stroke="#cfcfcf" stroke-width="1.3"/><circle cx="11.5" cy="5" r="1.2" fill="#cfcfcf"/><circle cx="13" cy="13" r="4.3" fill="#cfcfcf"/><path d="M13 10.5 L13 15.5 M10.5 13 L15.5 13" stroke="#4a4a4a" stroke-width="1.4"/></svg>
<svg style="left:374px;top:128px;" width="18" height="6" viewBox="0 0 18 6"><circle cx="3" cy="3" r="2" fill="#cfcfcf"/><circle cx="9" cy="3" r="2" fill="#cfcfcf"/><circle cx="15" cy="3" r="2" fill="#cfcfcf"/></svg>
<svg style="left:0px;top:0px" width="35" height="1040" viewBox="0 0 35 1040"><rect x="2" y="100" width="28" height="22" rx="3" fill="#363636"/><path d="M11.6 103.2 L22.6 113.3 L15.8 114.3 L11.6 119.6 Z" fill="none" stroke="#c8c8c8" stroke-width="1.3" stroke-linejoin="miter"/><path d="M11 127 L23 138.2 L16.2 139.2 L11 144 Z" fill="#c8c8c8"/><path d="M26 145 L29.5 145 L29.5 141.5 Z" fill="#c8c8c8"/><path d="M9 166.5 L20 156" stroke="#c8c8c8" stroke-width="2.2"/><path d="M13 152 L13.8 154.2 L16 155 L13.8 155.8 L13 158 L12.2 155.8 L10 155 L12.2 154.2Z" fill="#c8c8c8"/><path d="M21 151.5 L21.7 153.3 L23.5 154 L21.7 154.7 L21 156.5 L20.3 154.7 L18.5 154 L20.3 153.3Z" fill="#c8c8c8"/><circle cx="22" cy="159.5" r="1" fill="#c8c8c8"/><path d="M11 187 Q7 184 9 179.5 Q12 175 18 175.5 Q24.5 176 24 181" fill="none" stroke="#c8c8c8" stroke-width="1.1"/><path d="M10 183 q2 -2 3 0 q1 2 -1.5 3 q-1 2 1 3" fill="none" stroke="#c8c8c8" stroke-width="1"/><path d="M16.5 178.5 L26 188 L20.5 188 L16.5 192 Z" fill="#c8c8c8"/><path d="M8.5 215 L10.5 207.5 L16 203 L21 208 L16.5 213 Z" fill="#c8c8c8"/><path d="M17.5 201.5 L20.5 198.5 L24.5 202.5 L21.5 205.5 Z" fill="#c8c8c8"/><path d="M9 214.5 L14 209.5" stroke="#535353" stroke-width="1"/><path d="M26 217 L29.5 217 L29.5 213.5 Z" fill="#c8c8c8"/><path d="M10.0 239 L12.0 231.5 L17.5 227 L22.5 232 L18.0 237 Z" fill="#c8c8c8"/><path d="M19.0 225.5 L22.0 222.5 L26.0 226.5 L23.0 229.5 Z" fill="#c8c8c8"/><path d="M10.5 238.5 L15.5 233.5" stroke="#535353" stroke-width="1"/><path d="M10 239 Q5 237 7 231 Q9 226 7 223" fill="none" stroke="#c8c8c8" stroke-width="1"/><path d="M9 248 H23 V252.5 H21.8 V249.8 H17.2 V260.2 H19.5 V262 H12.5 V260.2 H14.8 V249.8 H10.2 V252.5 H9 Z" fill="#c8c8c8"/><path d="M26 265 L29.5 265 L29.5 261.5 Z" fill="#c8c8c8"/><path d="M9 286 L23 272.5" stroke="#c8c8c8" stroke-width="1.3"/><path d="M26 289 L29.5 289 L29.5 285.5 Z" fill="#c8c8c8"/><rect x="8.5" y="296.5" width="15.5" height="13.5" fill="#6a6a6a" stroke="#c8c8c8" stroke-width="1.2"/><path d="M26 313 L29.5 313 L29.5 309.5 Z" fill="#c8c8c8"/><path d="M15.5 330 L22.5 320.5 Q24 318.5 24.2 320 Q24 321.5 22.5 323 L17 331.5 Z" fill="#c8c8c8"/><path d="M8 334.5 Q10 333 10.5 330.5 Q11.5 327.5 14 328 Q16.5 329 16 331.5 Q15 334.5 8 334.5 Z" fill="#c8c8c8"/><path d="M26 337 L29.5 337 L29.5 333.5 Z" fill="#c8c8c8"/><path d="M18 347.5 A6.3 6.3 0 1 0 12.5 357.5" fill="none" stroke="#c8c8c8" stroke-width="1.1"/><path d="M13.5 359 L14 355 L24.5 345 Q26 344 26.5 345.5 Q27 346.5 25.8 347.8 L16 358 Z" fill="#c8c8c8"/><path d="M26 361 L29.5 361 L29.5 357.5 Z" fill="#c8c8c8"/><path d="M13 372 L18.5 366.5 L25 373 L19.5 378.5 Z" fill="#c8c8c8"/><path d="M13 372 L8.5 376.5 L13.5 381.5 L18 377" fill="none" stroke="#c8c8c8" stroke-width="1.1"/><path d="M26 385 L29.5 385 L29.5 381.5 Z" fill="#c8c8c8"/><path d="M10.5 394.5 Q14 391.5 18 392 Q24 393 24 399" fill="none" stroke="#c8c8c8" stroke-width="1.6"/><path d="M8 392 L9 398 L14 395.5 Z" fill="#c8c8c8"/><path d="M23.5 402 Q20 406.5 15 406.5 Q11 406 9 402" fill="none" stroke="#c8c8c8" stroke-width="1.1" stroke-dasharray="1 1.6"/><path d="M26 409 L29.5 409 L29.5 405.5 Z" fill="#c8c8c8"/><rect x="7.5" y="422.5" width="9" height="8" fill="none" stroke="#c8c8c8" stroke-width="1.1"/><rect x="11.5" y="415" width="13.3" height="11.5" fill="none" stroke="#c8c8c8" stroke-width="1.1"/><path d="M18 424 L23 419" stroke="#c8c8c8" stroke-width="1"/><path d="M20 417.5 L23.5 417.5 L23.5 421 Z" fill="#c8c8c8"/><path d="M26 433 L29.5 433 L29.5 429.5 Z" fill="#c8c8c8"/><path d="M10 442 Q9 439 11 441 Q13 446 16 446 Q20 445 23 444 Q26 443.5 25.5 447 Q25 451 22 449 Q20 448 17.5 451 Q14 453.5 11 450 Q9 447 10 442Z" fill="#c8c8c8"/><circle cx="13" cy="448" r="1.8" fill="#535353" stroke="#c8c8c8" stroke-width="0.8"/><circle cx="18.5" cy="442" r="1.3" fill="#535353" stroke="#c8c8c8" stroke-width="0.8"/><circle cx="8.5" cy="452.5" r="1.3" fill="#535353" stroke="#c8c8c8" stroke-width="0.8"/><path d="M9 452 L18 442.5" stroke="#c8c8c8" stroke-width="0.7"/><path d="M26 457 L29.5 457 L29.5 453.5 Z" fill="#c8c8c8"/><path d="M7 462.5 L17 472 L12 472.5 L7 477.5 Z" fill="#c8c8c8"/><rect x="13" y="465" width="12.5" height="12" fill="none" stroke="#c8c8c8" stroke-width="1" stroke-dasharray="1.8 1.3"/><path d="M26 481 L29.5 481 L29.5 477.5 Z" fill="#c8c8c8"/><ellipse cx="13" cy="493" rx="6" ry="4.5" fill="none" stroke="#c8c8c8" stroke-width="1"/><path d="M13 491 Q18 485 22 489 Q24 492 22 495" fill="none" stroke="#c8c8c8" stroke-width="1"/><path d="M9 493 H18" stroke="#c8c8c8" stroke-width="1" stroke-dasharray="1 1"/><path d="M19.5 492 L27 499.5 L23 499.8 L20 503 Z" fill="#c8c8c8"/><path d="M26 505 L29.5 505 L29.5 501.5 Z" fill="#c8c8c8"/><path d="M7.5 511 L18 514 L18 521 L24 526.5 L7.5 526.5 Z" fill="none" stroke="#c8c8c8" stroke-width="1"/><path d="M12.5 512.5 V526.5 M7.5 518.5 H18 M7.5 523 L18 521" stroke="#c8c8c8" stroke-width="0.9"/><path d="M18 518 L22.5 523.5 L18 523.5Z" fill="#7a7a7a"/><path d="M26 529 L29.5 529 L29.5 525.5 Z" fill="#c8c8c8"/><rect x="8.5" y="536.5" width="15" height="13" fill="none" stroke="#c8c8c8" stroke-width="1.2"/><path d="M8.5 543 Q13 538 18 540 M13 549.5 Q13 545 18 542 Q21 540 23.5 540 M15 536.5 Q22 541 21 549.5 M8.5 546 Q12 544 16 546" fill="none" stroke="#c8c8c8" stroke-width="0.9"/><defs><linearGradient id="gg" x1="0" x2="1"><stop offset="0" stop-color="#111"/><stop offset="1" stop-color="#e0e0e0"/></linearGradient></defs><rect x="8.5" y="560" width="15.5" height="14" fill="url(#gg)" stroke="#c8c8c8" stroke-width="1.1"/><path d="M10.5 596.5 L21 586" stroke="#c8c8c8" stroke-width="1.8"/><path d="M9.5 597.5 L10.5 593 L14 596.5Z M22 585 L21 589.5 L17.5 586Z" fill="#c8c8c8"/><path d="M8 594 L12.5 599 M19 583 L24 587.5" stroke="#c8c8c8" stroke-width="1"/><path d="M12 588.5 L15 586" stroke="#c8c8c8" stroke-width="1.4"/><path d="M9 621 Q7.5 622.5 9 623.5 Q10.5 624 12 622.5 L19.5 615 L16.5 612 Z" fill="none" stroke="#c8c8c8" stroke-width="1.1"/><path d="M16 611 L20.5 615.5 L22 614 L21 613 L23.5 610.5 Q24.5 608 22.5 607 Q20.5 606 19 608 L16.5 610.5 L17 611Z" fill="#c8c8c8"/><path d="M26 625 L29.5 625 L29.5 621.5 Z" fill="#c8c8c8"/><rect x="7" y="632" width="8" height="7" fill="#c8c8c8"/><path d="M13 636 L17.5 634 L20.5 636.5 L20 641 L15 643 L12 640.5Z" fill="#7a7a7a" stroke="#c8c8c8" stroke-width="0.8"/><circle cx="21" cy="642" r="4" fill="#535353" stroke="#c8c8c8" stroke-width="1.1"/><rect x="7" y="656" width="1.8" height="1.8" fill="#c8c8c8"/><rect x="10" y="656" width="1.8" height="1.8" fill="#c8c8c8"/><rect x="13" y="656" width="1.8" height="1.8" fill="#c8c8c8"/><rect x="7" y="659" width="1.8" height="1.8" fill="#c8c8c8"/><rect x="10" y="659" width="1.8" height="1.8" fill="#c8c8c8"/><rect x="7" y="662" width="1.8" height="1.8" fill="#c8c8c8"/><rect x="15.5" y="660" width="8" height="10.5" fill="none" stroke="#c8c8c8" stroke-width="1.1"/><circle cx="19.5" cy="665" r="1.8" fill="none" stroke="#c8c8c8" stroke-width="1.1"/><rect x="17.5" y="656" width="4" height="3" fill="#c8c8c8"/><path d="M26 673 L29.5 673 L29.5 669.5 Z" fill="#c8c8c8"/><path d="M7.5 679 V693.5 H25" fill="none" stroke="#c8c8c8" stroke-width="1"/><rect x="11" y="686" width="2.8" height="7.5" fill="#c8c8c8"/><rect x="16" y="680" width="2.8" height="13.5" fill="#c8c8c8"/><rect x="21" y="682" width="2.8" height="11.5" fill="#c8c8c8"/><path d="M26 697 L29.5 697 L29.5 693.5 Z" fill="#c8c8c8"/><path d="M12 702 V708 M6.5 707 H12.5" stroke="#c8c8c8" stroke-width="1"/><path d="M11.5 706.5 H20 L24 710.5 V718 H11.5 Z" fill="#6a6a6a" stroke="#c8c8c8" stroke-width="1.1"/><path d="M7.5 742.5 L19 729 L24 733 L13 740 Z" fill="none" stroke="#c8c8c8" stroke-width="1"/><path d="M19.5 727 L21.5 725 L25 728.5 L23 730.5 Z" fill="#c8c8c8"/><path d="M26 745 L29.5 745 L29.5 741.5 Z" fill="#c8c8c8"/><path d="M12.5 766.5 Q9 764 8 760 Q9.5 758.5 11.5 760.5 L11.5 753 Q12.5 751.5 13.5 753 L13.5 758 L14 751.5 Q15 750 16.3 751.5 L16.5 758 L17.5 752 Q18.8 751 19.5 752.5 L19.2 759 L21.5 755 Q23 754.5 23 756 L20.5 764 Q19 767 16 767 Z" fill="#c8c8c8"/><path d="M26 769 L29.5 769 L29.5 765.5 Z" fill="#c8c8c8"/><path d="M8.5 774.5 Q11.5 783 8.5 791.5" fill="none" stroke="#c8c8c8" stroke-width="0.9"/><path d="M12 776 L20 775 L20.5 781 L12 781.5Z M12 784 L23.5 784.5 L23 790.5 L12 790Z" fill="#c8c8c8"/><circle cx="14" cy="805" r="5.5" fill="none" stroke="#c8c8c8" stroke-width="1.1"/><path d="M18 809 L23.5 814.5" stroke="#c8c8c8" stroke-width="1.8"/><rect x="1" y="821" width="30" height="1" fill="#4a4a4a"/><rect x="4.5" y="829.5" width="8" height="8" fill="#000" stroke="#fff" stroke-width="1"/><rect x="1.5" y="826" width="7.5" height="7.5" fill="#fff" stroke="#000" stroke-width="1"/><path d="M24 830 Q29 828 30 834.5" fill="none" stroke="#c8c8c8" stroke-width="1.4"/><path d="M21.5 829.5 L25 826.5 L25 832.5Z M27.5 834 L33 834 L30 837.5Z" fill="#c8c8c8"/><rect x="12.5" y="854.5" width="18" height="17.5" fill="#111" stroke="#fff" stroke-width="1.3"/><rect x="16.5" y="858.5" width="10" height="9.5" fill="#555" stroke="#fff" stroke-width="1.3"/><rect x="1.5" y="844.5" width="18.5" height="18.5" fill="#fff" stroke="#222" stroke-width="0.8"/><rect x="2.5" y="880" width="27" height="9.5" fill="#222"/><rect x="3" y="880.5" width="7.5" height="8.5" fill="#fff"/><rect x="11.5" y="880.5" width="8" height="8.5" fill="url(#gg2)"/><defs><linearGradient id="gg2" x1="0" x2="1"><stop offset="0" stop-color="#fff"/><stop offset="1" stop-color="#111"/></linearGradient></defs><rect x="20.5" y="880.5" width="8.5" height="8.5" fill="#fff"/><path d="M20.5 889 L29 880.5" stroke="#f00" stroke-width="1.3"/><circle cx="14.5" cy="903" r="3.8" fill="none" stroke="#c8c8c8" stroke-width="1"/><rect x="15" y="903.5" width="6" height="6" fill="#c8c8c8"/><rect x="13.5" y="922" width="11.5" height="9" fill="#6a6a6a" stroke="#c8c8c8" stroke-width="1"/><rect x="7" y="925.5" width="11.5" height="9.5" fill="#6a6a6a" stroke="#c8c8c8" stroke-width="1"/><path d="M7 927.5 H18.5 M13.5 924 H25" stroke="#c8c8c8" stroke-width="1"/><circle cx="10" cy="961" r="1.7" fill="#c8c8c8"/><circle cx="16" cy="961" r="1.7" fill="#c8c8c8"/><circle cx="22" cy="961" r="1.7" fill="#c8c8c8"/><rect x="2" y="975" width="28" height="28" rx="3" fill="#1473e6"/><path d="M19 980.5 L20.2 985.5 L24.5 987.5 L20.2 989.5 L19 994.5 L17.8 989.5 L13.5 987.5 L17.8 985.5Z" fill="#fff"/><path d="M11.5 990.5 L12.2 993 L14.5 994 L12.2 995 L11.5 997.5 L10.8 995 L8.5 994 L10.8 993Z" fill="#fff"/></svg>
<svg style="left:1287px;top:0px" width="37" height="1040" viewBox="0 0 37 1040"><g><rect x="0" y="68" width="37" height="12" fill="#3e3e3e"/><rect x="9.50" y="82" width="0.9" height="4.5" fill="#2f2f2f"/><rect x="11.25" y="82" width="0.9" height="4.5" fill="#2f2f2f"/><rect x="13.00" y="82" width="0.9" height="4.5" fill="#2f2f2f"/><rect x="14.75" y="82" width="0.9" height="4.5" fill="#2f2f2f"/><rect x="16.50" y="82" width="0.9" height="4.5" fill="#2f2f2f"/><rect x="18.25" y="82" width="0.9" height="4.5" fill="#2f2f2f"/><rect x="20.00" y="82" width="0.9" height="4.5" fill="#2f2f2f"/><rect x="21.75" y="82" width="0.9" height="4.5" fill="#2f2f2f"/><rect x="23.50" y="82" width="0.9" height="4.5" fill="#2f2f2f"/><rect x="25.25" y="82" width="0.9" height="4.5" fill="#2f2f2f"/><rect x="27.00" y="82" width="0.9" height="4.5" fill="#2f2f2f"/><rect x="13.5" y="97.5" width="11" height="11" fill="none" stroke="#c8c8c8" stroke-width="1"/><rect x="12.1" y="96.1" width="2.8" height="2.8" fill="#c8c8c8"/><rect x="12.1" y="107.1" width="2.8" height="2.8" fill="#c8c8c8"/><rect x="17.6" y="96.1" width="2.8" height="2.8" fill="#c8c8c8"/><rect x="17.6" y="107.1" width="2.8" height="2.8" fill="#c8c8c8"/><rect x="23.1" y="96.1" width="2.8" height="2.8" fill="#c8c8c8"/><rect x="23.1" y="107.1" width="2.8" height="2.8" fill="#c8c8c8"/><rect x="12.1" y="101.6" width="2.8" height="2.8" fill="#c8c8c8"/><rect x="23.1" y="101.6" width="2.8" height="2.8" fill="#c8c8c8"/><path d="M19 102 V104 M18 103 H20" stroke="#c8c8c8" stroke-width="0.7"/><rect x="12" y="122" width="1" height="19" fill="#c8c8c8"/><rect x="14" y="125" width="8" height="6" fill="#c8c8c8"/><rect x="14" y="133" width="13" height="5" fill="#c8c8c8"/><path d="M12 152 H21 V156 H17 V160 H12 Z" fill="#c8c8c8"/><path d="M17 159 H26 V167 H17.5 V161.5 H20 V158 Z" fill="#c8c8c8"/><rect x="17.5" y="156.5" width="3" height="3" fill="#c8c8c8"/><path d="M11 188 Q11 181.5 19 181 Q27 181 27 187 Q27 190 23 190 Q21 190.5 21 192 Q20.5 194.5 17 194 Q11 193.5 11 188Z" fill="#c8c8c8"/><circle cx="14.5" cy="186" r="1.3" fill="#535353"/><circle cx="18" cy="184.5" r="1.3" fill="#535353"/><circle cx="22" cy="184.5" r="1.3" fill="#535353"/><circle cx="25" cy="187.5" r="1.3" fill="#535353"/><circle cx="15.5" cy="190" r="1.3" fill="#535353"/><path d="M12 223 V207 Q21 207 26 223 Z" fill="none" stroke="#c8c8c8" stroke-width="1"/><path d="M12.5 222.5 V209 Q20 210 24.5 222.5 Z" fill="#8a8a8a"/><path d="M12.5 222.5 L17 212 M12.5 222.5 L21 215.5 M12.5 222.5 L23.5 219" stroke="#bdbdbd" stroke-width="0.8"/><rect x="0" y="232" width="37" height="1" fill="#3a3a3a"/><rect x="9.50" y="235.5" width="0.9" height="4.5" fill="#2f2f2f"/><rect x="11.25" y="235.5" width="0.9" height="4.5" fill="#2f2f2f"/><rect x="13.00" y="235.5" width="0.9" height="4.5" fill="#2f2f2f"/><rect x="14.75" y="235.5" width="0.9" height="4.5" fill="#2f2f2f"/><rect x="16.50" y="235.5" width="0.9" height="4.5" fill="#2f2f2f"/><rect x="18.25" y="235.5" width="0.9" height="4.5" fill="#2f2f2f"/><rect x="20.00" y="235.5" width="0.9" height="4.5" fill="#2f2f2f"/><rect x="21.75" y="235.5" width="0.9" height="4.5" fill="#2f2f2f"/><rect x="23.50" y="235.5" width="0.9" height="4.5" fill="#2f2f2f"/><rect x="25.25" y="235.5" width="0.9" height="4.5" fill="#2f2f2f"/><rect x="27.00" y="235.5" width="0.9" height="4.5" fill="#2f2f2f"/><rect x="11.5" y="251" width="15" height="10.5" fill="#7a7a7a" stroke="#c8c8c8" stroke-width="1"/><path d="M16.5 251 V261.5 M21.5 251 V261.5 M11.5 256.25 H26.5" stroke="#c8c8c8" stroke-width="1"/><rect x="17" y="251.5" width="4" height="4.5" fill="#c8c8c8"/><rect x="14.5" y="286" width="9" height="8" fill="#c8c8c8"/><path d="M16.5 286 L16 278 M19 286 L19.5 275.5 M21.5 286 L24 279.5" stroke="#c8c8c8" stroke-width="1.1"/><ellipse cx="15.5" cy="281" rx="1.8" ry="3" fill="#c8c8c8"/><circle cx="19.5" cy="276" r="1.5" fill="#c8c8c8"/><ellipse cx="25" cy="281" rx="2.8" ry="1.6" fill="#c8c8c8"/><circle cx="19" cy="306" r="3.8" fill="#c8c8c8"/><circle cx="15.3" cy="312" r="3.8" fill="#c8c8c8"/><circle cx="22.7" cy="312" r="3.8" fill="#c8c8c8"/><path d="M19 310 L18 318.5 H20 Z" fill="#c8c8c8"/><rect x="14" y="318.5" width="10.5" height="1.2" fill="#c8c8c8"/><rect x="0" y="329" width="37" height="1" fill="#3a3a3a"/><rect x="9.50" y="332.5" width="0.9" height="4.5" fill="#2f2f2f"/><rect x="11.25" y="332.5" width="0.9" height="4.5" fill="#2f2f2f"/><rect x="13.00" y="332.5" width="0.9" height="4.5" fill="#2f2f2f"/><rect x="14.75" y="332.5" width="0.9" height="4.5" fill="#2f2f2f"/><rect x="16.50" y="332.5" width="0.9" height="4.5" fill="#2f2f2f"/><rect x="18.25" y="332.5" width="0.9" height="4.5" fill="#2f2f2f"/><rect x="20.00" y="332.5" width="0.9" height="4.5" fill="#2f2f2f"/><rect x="21.75" y="332.5" width="0.9" height="4.5" fill="#2f2f2f"/><rect x="23.50" y="332.5" width="0.9" height="4.5" fill="#2f2f2f"/><rect x="25.25" y="332.5" width="0.9" height="4.5" fill="#2f2f2f"/><rect x="27.00" y="332.5" width="0.9" height="4.5" fill="#2f2f2f"/><rect x="12" y="347" width="14" height="1.2" fill="#c8c8c8"/><rect x="12" y="351.5" width="14" height="1.6" fill="#c8c8c8"/><rect x="12" y="356.5" width="14" height="2.3" fill="#c8c8c8"/><defs><linearGradient id="g3" x1="0" x2="1"><stop offset="0" stop-color="#111"/><stop offset="1" stop-color="#ddd"/></linearGradient></defs><rect x="12.5" y="375.5" width="13.5" height="11" fill="url(#g3)" stroke="#c8c8c8" stroke-width="1"/><circle cx="16" cy="406.5" r="5.2" fill="#c8c8c8"/><circle cx="21" cy="412.5" r="5.2" fill="#8a8a8a" stroke="#c8c8c8" stroke-width="0.9"/><rect x="0" y="426" width="37" height="1" fill="#3a3a3a"/><rect x="9.50" y="429.5" width="0.9" height="4.5" fill="#2f2f2f"/><rect x="11.25" y="429.5" width="0.9" height="4.5" fill="#2f2f2f"/><rect x="13.00" y="429.5" width="0.9" height="4.5" fill="#2f2f2f"/><rect x="14.75" y="429.5" width="0.9" height="4.5" fill="#2f2f2f"/><rect x="16.50" y="429.5" width="0.9" height="4.5" fill="#2f2f2f"/><rect x="18.25" y="429.5" width="0.9" height="4.5" fill="#2f2f2f"/><rect x="20.00" y="429.5" width="0.9" height="4.5" fill="#2f2f2f"/><rect x="21.75" y="429.5" width="0.9" height="4.5" fill="#2f2f2f"/><rect x="23.50" y="429.5" width="0.9" height="4.5" fill="#2f2f2f"/><rect x="25.25" y="429.5" width="0.9" height="4.5" fill="#2f2f2f"/><rect x="27.00" y="429.5" width="0.9" height="4.5" fill="#2f2f2f"/><circle cx="19" cy="450.5" r="5.8" fill="#c8c8c8"/><circle cx="19" cy="450.5" r="8" fill="none" stroke="#c8c8c8" stroke-width="0.9" stroke-dasharray="1.3 1.3"/><rect x="17" y="472" width="10" height="9.5" fill="none" stroke="#c8c8c8" stroke-width="1.1"/><rect x="12.5" y="478" width="4.5" height="4.5" fill="none" stroke="#c8c8c8" stroke-width="1.1"/><rect x="15.5" y="481" width="4.5" height="4.5" fill="none" stroke="#c8c8c8" stroke-width="1.1"/><rect x="0" y="494" width="37" height="1" fill="#3a3a3a"/><rect x="9.50" y="498" width="0.9" height="4.5" fill="#2f2f2f"/><rect x="11.25" y="498" width="0.9" height="4.5" fill="#2f2f2f"/><rect x="13.00" y="498" width="0.9" height="4.5" fill="#2f2f2f"/><rect x="14.75" y="498" width="0.9" height="4.5" fill="#2f2f2f"/><rect x="16.50" y="498" width="0.9" height="4.5" fill="#2f2f2f"/><rect x="18.25" y="498" width="0.9" height="4.5" fill="#2f2f2f"/><rect x="20.00" y="498" width="0.9" height="4.5" fill="#2f2f2f"/><rect x="21.75" y="498" width="0.9" height="4.5" fill="#2f2f2f"/><rect x="23.50" y="498" width="0.9" height="4.5" fill="#2f2f2f"/><rect x="25.25" y="498" width="0.9" height="4.5" fill="#2f2f2f"/><rect x="27.00" y="498" width="0.9" height="4.5" fill="#2f2f2f"/><path d="M18 511 H12.5 V526 H26 V520" fill="none" stroke="#c8c8c8" stroke-width="1.3"/><path d="M18 520 L26 511.5 M21 510.5 H26.5 V516" fill="none" stroke="#c8c8c8" stroke-width="1.3"/><rect x="12.5" y="539.5" width="9" height="9" fill="none" stroke="#c8c8c8" stroke-width="1.1"/><rect x="16.5" y="544.5" width="9.5" height="9" fill="#535353" stroke="#c8c8c8" stroke-width="1.1"/><rect x="0" y="563" width="37" height="1" fill="#3a3a3a"/><rect x="9.50" y="567" width="0.9" height="4.5" fill="#2f2f2f"/><rect x="11.25" y="567" width="0.9" height="4.5" fill="#2f2f2f"/><rect x="13.00" y="567" width="0.9" height="4.5" fill="#2f2f2f"/><rect x="14.75" y="567" width="0.9" height="4.5" fill="#2f2f2f"/><rect x="16.50" y="567" width="0.9" height="4.5" fill="#2f2f2f"/><rect x="18.25" y="567" width="0.9" height="4.5" fill="#2f2f2f"/><rect x="20.00" y="567" width="0.9" height="4.5" fill="#2f2f2f"/><rect x="21.75" y="567" width="0.9" height="4.5" fill="#2f2f2f"/><rect x="23.50" y="567" width="0.9" height="4.5" fill="#2f2f2f"/><rect x="25.25" y="567" width="0.9" height="4.5" fill="#2f2f2f"/><rect x="27.00" y="567" width="0.9" height="4.5" fill="#2f2f2f"/><rect x="11.5" y="582" width="15" height="1" fill="#c8c8c8"/><circle cx="16" cy="582.5" r="1.8" fill="#535353" stroke="#c8c8c8" stroke-width="1"/><rect x="11.5" y="587" width="15" height="1" fill="#c8c8c8"/><circle cx="22" cy="587.5" r="1.8" fill="#535353" stroke="#c8c8c8" stroke-width="1"/><rect x="11.5" y="592" width="15" height="1" fill="#c8c8c8"/><circle cx="17" cy="592.5" r="1.8" fill="#535353" stroke="#c8c8c8" stroke-width="1"/><rect x="0" y="604" width="37" height="1" fill="#3a3a3a"/><rect x="9.50" y="607.5" width="0.9" height="4.5" fill="#2f2f2f"/><rect x="11.25" y="607.5" width="0.9" height="4.5" fill="#2f2f2f"/><rect x="13.00" y="607.5" width="0.9" height="4.5" fill="#2f2f2f"/><rect x="14.75" y="607.5" width="0.9" height="4.5" fill="#2f2f2f"/><rect x="16.50" y="607.5" width="0.9" height="4.5" fill="#2f2f2f"/><rect x="18.25" y="607.5" width="0.9" height="4.5" fill="#2f2f2f"/><rect x="20.00" y="607.5" width="0.9" height="4.5" fill="#2f2f2f"/><rect x="21.75" y="607.5" width="0.9" height="4.5" fill="#2f2f2f"/><rect x="23.50" y="607.5" width="0.9" height="4.5" fill="#2f2f2f"/><rect x="25.25" y="607.5" width="0.9" height="4.5" fill="#2f2f2f"/><rect x="27.00" y="607.5" width="0.9" height="4.5" fill="#2f2f2f"/><text x="11.5" y="636" font-size="15" font-weight="700" fill="#c8c8c8" font-family="Liberation Sans">A</text><rect x="24" y="621.5" width="1.2" height="15" fill="#c8c8c8"/><path d="M18 651 H24.5 V652.5 H23 V665 H21.5 V652.5 H20.3 V665 H18.8 V659 Q14 659 14 655 Q14 651 18 651Z" fill="#c8c8c8"/><text x="12" y="693.5" font-size="18" font-style="italic" font-weight="700" fill="#c8c8c8" font-family="Liberation Serif">O</text><rect x="0" y="702" width="37" height="1" fill="#3a3a3a"/></g></svg>
<div style="left:1287px;top:68px;width:290px;height:12px;background:#3e3e3e;"></div>
<svg style="left:1311px;top:71px;" width="8" height="7" viewBox="0 0 8 7"><path d="M3.5 1 L1 3.5 L3.5 6 M7.5 1 L5 3.5 L7.5 6" fill="none" stroke="#bdbdbd" stroke-width="1"/></svg>
<svg style="left:1563px;top:71px;" width="9" height="7" viewBox="0 0 9 7"><path d="M1 1 L3.5 3.5 L1 6 M5.5 1 L8 3.5 L5.5 6" fill="none" stroke="#bdbdbd" stroke-width="1"/></svg>
<div style="left:1327px;top:80px;width:250px;height:27px;background:#3e3e3e;"></div>
<div style="left:1327px;top:80px;width:51px;height:27px;background:#535353;"></div>
<div style="left:1378px;top:80px;width:62px;height:26px;background:#474747;"></div>
<div style="left:1440px;top:80px;width:1px;height:26px;background:#3a3a3a;"></div>
<div class="t" style="left:1336px;top:87px;font-size:10.6px;color:#f2f2f2;font-weight:700;-webkit-text-stroke:0">Layers</div>
<div class="t" style="left:1387px;top:87px;font-size:10.8px;color:#c8c8c8;font-weight:700;-webkit-text-stroke:0">Libraries</div>
<svg style="left:1561px;top:88px;" width="11" height="10" viewBox="0 0 11 10"><rect x="0" y="0.5" width="10.5" height="1.3" fill="#c9c9c9"/><rect x="0" y="4.2" width="10.5" height="1.3" fill="#c9c9c9"/><rect x="0" y="8" width="10.5" height="1.3" fill="#c9c9c9"/></svg>
<div style="left:1333px;top:113px;width:238px;height:907px;border:1px solid #5c5c5c;border-bottom-color:#5c5c5c;"></div>
<div style="left:1334px;top:114px;width:236px;height:35px;background:#535353;"></div>
<div style="left:1338px;top:118px;width:204px;height:22px;background:#444444;border:1px solid #4d4d4d;border-radius:3px;"></div>
<svg style="left:1344px;top:122px;" width="14" height="14" viewBox="0 0 14 14"><circle cx="5.5" cy="5.5" r="4.3" fill="none" stroke="#c9c9c9" stroke-width="1.3"/><path d="M8.6 8.6 L12.5 12.5" stroke="#c9c9c9" stroke-width="1.6"/></svg>
<div class="t" style="left:1367px;top:123.5px;font-size:10.4px;color:#c4c4c4;font-style:italic">Search All</div>
<svg style="left:1552px;top:121px;" width="15" height="15" viewBox="0 0 15 15"><path d="M0.5 0.5 H14.5 L9 7 V14.5 L6 12 V7 Z" fill="#c9c9c9"/></svg>
<div style="left:1333px;top:150px;width:238px;height:33px;background:#4e5e76;"></div>
<div style="left:1333px;top:182px;width:238px;height:1px;background:#5e5e5e;"></div>
<div style="left:1353px;top:150px;width:1px;height:32px;background:#5a6a80;"></div>
<div style="left:1374px;top:150px;width:1px;height:32px;background:#5a6a80;"></div>
<div style="left:1535px;top:150px;width:1px;height:32px;background:#5a6a80;"></div>
<div style="left:1376px;top:151px;width:3px;height:30px;background:#d8955a;"></div>
<svg style="left:1387px;top:162px;" width="7" height="10" viewBox="0 0 7 10"><path d="M1.5 1 L5.5 5 L1.5 9" fill="none" stroke="#d0d0d0" stroke-width="1.2"/></svg>
<div style="left:1405px;top:151px;width:30px;height:30px;box-sizing:border-box;background:#fff;border:1.5px solid #0a0a0a;"></div>
<div class="t" style="left:1440px;top:161px;font-size:10.8px;color:#e2e2e2;">Colors</div>
<div style="left:1542px;top:162px;width:7px;height:7px;border:1.2px solid #d8d8d8;border-radius:50%;"></div>
<svg style="left:1336px;top:161px;" width="13" height="9" viewBox="0 0 13 9"><path d="M0.8 4.5 Q6.5 -1.5 12.2 4.5 Q6.5 10.5 0.8 4.5Z" fill="none" stroke="#c9c9c9" stroke-width="1"/></svg>
<div style="left:1333px;top:215px;width:238px;height:1px;background:#5e5e5e;"></div>
<div style="left:1353px;top:183px;width:1px;height:32px;background:#5e5e5e;"></div>
<div style="left:1374px;top:183px;width:1px;height:32px;background:#5e5e5e;"></div>
<div style="left:1535px;top:183px;width:1px;height:32px;background:#5e5e5e;"></div>
<div style="left:1376px;top:184px;width:3px;height:30px;background:#f040f0;"></div>
<svg style="left:1387px;top:195px;" width="7" height="10" viewBox="0 0 7 10"><path d="M1.5 1 L5.5 5 L1.5 9" fill="none" stroke="#d0d0d0" stroke-width="1.2"/></svg>
<div style="left:1405px;top:184px;width:30px;height:30px;box-sizing:border-box;background:#fff;border:1.5px solid #0a0a0a;"></div>
<div class="t" style="left:1440px;top:194px;font-size:10.8px;color:#e2e2e2;">Center</div>
<div style="left:1542px;top:195px;width:7px;height:7px;border:1.2px solid #d8d8d8;border-radius:50%;"></div>
<div style="left:1333px;top:248px;width:238px;height:1px;background:#5e5e5e;"></div>
<div style="left:1353px;top:216px;width:1px;height:32px;background:#5e5e5e;"></div>
<div style="left:1374px;top:216px;width:1px;height:32px;background:#5e5e5e;"></div>
<div style="left:1535px;top:216px;width:1px;height:32px;background:#5e5e5e;"></div>
<div style="left:1376px;top:217px;width:3px;height:30px;background:#8a8a8a;"></div>
<svg style="left:1387px;top:228px;" width="7" height="10" viewBox="0 0 7 10"><path d="M1.5 1 L5.5 5 L1.5 9" fill="none" stroke="#d0d0d0" stroke-width="1.2"/></svg>
<div style="left:1405px;top:217px;width:30px;height:30px;box-sizing:border-box;background:#fff;border:1.5px solid #0a0a0a;"></div>
<div class="t" style="left:1440px;top:227px;font-size:10.8px;color:#e2e2e2;">Corners</div>
<div style="left:1542px;top:228px;width:7px;height:7px;border:1.2px solid #d8d8d8;border-radius:50%;"></div>
<div style="left:1333px;top:281px;width:238px;height:1px;background:#5e5e5e;"></div>
<div style="left:1353px;top:249px;width:1px;height:32px;background:#5e5e5e;"></div>
<div style="left:1374px;top:249px;width:1px;height:32px;background:#5e5e5e;"></div>
<div style="left:1535px;top:249px;width:1px;height:32px;background:#5e5e5e;"></div>
<div style="left:1376px;top:250px;width:3px;height:30px;background:#f04848;"></div>
<svg style="left:1387px;top:261px;" width="7" height="10" viewBox="0 0 7 10"><path d="M1.5 1 L5.5 5 L1.5 9" fill="none" stroke="#d0d0d0" stroke-width="1.2"/></svg>
<div style="left:1405px;top:250px;width:30px;height:30px;box-sizing:border-box;background:#fff;border:1.5px solid #0a0a0a;"></div>
<div class="t" style="left:1440px;top:260px;font-size:10.8px;color:#e2e2e2;">Nicolae 1</div>
<div style="left:1542px;top:261px;width:7px;height:7px;border:1.2px solid #d8d8d8;border-radius:50%;"></div>
<div style="left:1333px;top:314px;width:238px;height:1px;background:#5e5e5e;"></div>
<div style="left:1353px;top:282px;width:1px;height:32px;background:#5e5e5e;"></div>
<div style="left:1374px;top:282px;width:1px;height:32px;background:#5e5e5e;"></div>
<div style="left:1535px;top:282px;width:1px;height:32px;background:#5e5e5e;"></div>
<div style="left:1376px;top:283px;width:3px;height:30px;background:#129c96;"></div>
<svg style="left:1387px;top:294px;" width="7" height="10" viewBox="0 0 7 10"><path d="M1.5 1 L5.5 5 L1.5 9" fill="none" stroke="#d0d0d0" stroke-width="1.2"/></svg>
<div style="left:1405px;top:283px;width:30px;height:30px;box-sizing:border-box;background:#fff;border:1.5px solid #0a0a0a;"></div>
<div class="t" style="left:1440px;top:293px;font-size:10.8px;color:#e2e2e2;">Nicolae 2</div>
<div style="left:1542px;top:294px;width:7px;height:7px;border:1.2px solid #d8d8d8;border-radius:50%;"></div>
<div style="left:1333px;top:347px;width:238px;height:1px;background:#5e5e5e;"></div>
<div style="left:1353px;top:315px;width:1px;height:32px;background:#5e5e5e;"></div>
<div style="left:1374px;top:315px;width:1px;height:32px;background:#5e5e5e;"></div>
<div style="left:1535px;top:315px;width:1px;height:32px;background:#5e5e5e;"></div>
<div style="left:1376px;top:316px;width:3px;height:30px;background:#f59ac8;"></div>
<svg style="left:1387px;top:327px;" width="7" height="10" viewBox="0 0 7 10"><path d="M1.5 1 L5.5 5 L1.5 9" fill="none" stroke="#d0d0d0" stroke-width="1.2"/></svg>
<div style="left:1405px;top:316px;width:30px;height:30px;box-sizing:border-box;background:#fff;border:1.5px solid #0a0a0a;"></div>
<div class="t" style="left:1440px;top:326px;font-size:10.8px;color:#e2e2e2;">Nicolae 3</div>
<div style="left:1542px;top:327px;width:7px;height:7px;border:1.2px solid #d8d8d8;border-radius:50%;"></div>
<div style="left:1333px;top:380px;width:238px;height:1px;background:#5e5e5e;"></div>
<div style="left:1353px;top:348px;width:1px;height:32px;background:#5e5e5e;"></div>
<div style="left:1374px;top:348px;width:1px;height:32px;background:#5e5e5e;"></div>
<div style="left:1535px;top:348px;width:1px;height:32px;background:#5e5e5e;"></div>
<div style="left:1376px;top:349px;width:3px;height:30px;background:#0d0d80;"></div>
<svg style="left:1387px;top:360px;" width="7" height="10" viewBox="0 0 7 10"><path d="M1.5 1 L5.5 5 L1.5 9" fill="none" stroke="#d0d0d0" stroke-width="1.2"/></svg>
<div style="left:1405px;top:349px;width:30px;height:30px;box-sizing:border-box;background:#fff;border:1.5px solid #0a0a0a;"></div>
<div class="t" style="left:1440px;top:359px;font-size:10.8px;color:#e2e2e2;">Nicolae 4</div>
<div style="left:1542px;top:360px;width:7px;height:7px;border:1.2px solid #d8d8d8;border-radius:50%;"></div>
<div style="left:1333px;top:413px;width:238px;height:1px;background:#5e5e5e;"></div>
<div style="left:1353px;top:381px;width:1px;height:32px;background:#5e5e5e;"></div>
<div style="left:1374px;top:381px;width:1px;height:32px;background:#5e5e5e;"></div>
<div style="left:1535px;top:381px;width:1px;height:32px;background:#5e5e5e;"></div>
<div style="left:1376px;top:382px;width:3px;height:30px;background:#4de04d;"></div>
<svg style="left:1387px;top:393px;" width="7" height="10" viewBox="0 0 7 10"><path d="M1.5 1 L5.5 5 L1.5 9" fill="none" stroke="#d0d0d0" stroke-width="1.2"/></svg>
<div style="left:1405px;top:382px;width:30px;height:30px;box-sizing:border-box;background:#fff;border:1.5px solid #0a0a0a;"></div>
<div class="t" style="left:1440px;top:392px;font-size:10.8px;color:#e2e2e2;">Guides</div>
<div style="left:1542px;top:393px;width:7px;height:7px;border:1.2px solid #d8d8d8;border-radius:50%;"></div>
<div style="left:1333px;top:446px;width:238px;height:1px;background:#5e5e5e;"></div>
<div style="left:1353px;top:414px;width:1px;height:32px;background:#5e5e5e;"></div>
<div style="left:1374px;top:414px;width:1px;height:32px;background:#5e5e5e;"></div>
<div style="left:1535px;top:414px;width:1px;height:32px;background:#5e5e5e;"></div>
<div style="left:1376px;top:415px;width:3px;height:30px;background:#4f7cf0;"></div>
<svg style="left:1387px;top:426px;" width="7" height="10" viewBox="0 0 7 10"><path d="M1.5 1 L5.5 5 L1.5 9" fill="none" stroke="#d0d0d0" stroke-width="1.2"/></svg>
<div style="left:1405px;top:415px;width:30px;height:30px;box-sizing:border-box;background:#fff;border:1.5px solid #0a0a0a;"></div>
<div class="t" style="left:1440px;top:425px;font-size:10.8px;color:#e2e2e2;">Original</div>
<div style="left:1542px;top:426px;width:7px;height:7px;border:1.2px solid #d8d8d8;border-radius:50%;"></div>
<svg style="left:1358px;top:424px;" width="10" height="12" viewBox="0 0 10 12"><path d="M2.5 5.5 V3.5 Q2.5 0.8 5 0.8 Q7.5 0.8 7.5 3.5 V5.5" fill="none" stroke="#c9c9c9" stroke-width="1.3"/><rect x="1" y="5.5" width="8" height="6" fill="#c9c9c9"/><circle cx="5" cy="8.5" r="1" fill="#535353"/></svg>
<div style="left:1333px;top:479px;width:238px;height:1px;background:#5e5e5e;"></div>
<div style="left:1353px;top:447px;width:1px;height:32px;background:#5e5e5e;"></div>
<div style="left:1374px;top:447px;width:1px;height:32px;background:#5e5e5e;"></div>
<div style="left:1535px;top:447px;width:1px;height:32px;background:#5e5e5e;"></div>
<div style="left:1376px;top:448px;width:3px;height:30px;background:#ff6414;"></div>
<svg style="left:1386px;top:461px;" width="10" height="6" viewBox="0 0 10 6"><path d="M1 1 L5 5 L9 1" fill="none" stroke="#d0d0d0" stroke-width="1.2"/></svg>
<div style="left:1405px;top:448px;width:30px;height:30px;box-sizing:border-box;background:#fff;border:1.5px solid #0a0a0a;"></div>
<div class="t" style="left:1440px;top:458px;font-size:10.8px;color:#e2e2e2;">Bg</div>
<div style="left:1542px;top:459px;width:7px;height:7px;border:1.2px solid #d8d8d8;border-radius:50%;"></div>
<svg style="left:1336px;top:458px;" width="13" height="9" viewBox="0 0 13 9"><path d="M0.8 4.5 Q6.5 -1.5 12.2 4.5 Q6.5 10.5 0.8 4.5Z" fill="none" stroke="#c9c9c9" stroke-width="1"/></svg>
<div style="left:1333px;top:512px;width:238px;height:1px;background:#5e5e5e;"></div>
<div style="left:1353px;top:480px;width:1px;height:32px;background:#5e5e5e;"></div>
<div style="left:1374px;top:480px;width:1px;height:32px;background:#5e5e5e;"></div>
<div style="left:1535px;top:480px;width:1px;height:32px;background:#5e5e5e;"></div>
<div style="left:1376px;top:481px;width:3px;height:30px;background:#ff6414;"></div>
<div style="left:1428px;top:481px;width:30px;height:30px;box-sizing:border-box;background:#fff;border:1.5px solid #0a0a0a;"></div>
<div class="t" style="left:1464px;top:491px;font-size:10.8px;color:#e2e2e2;">&lt;Rect...</div>
<div style="left:1542px;top:492px;width:7px;height:7px;border:1.2px solid #d8d8d8;border-radius:50%;"></div>
<svg style="left:1336px;top:491px;" width="13" height="9" viewBox="0 0 13 9"><path d="M0.8 4.5 Q6.5 -1.5 12.2 4.5 Q6.5 10.5 0.8 4.5Z" fill="none" stroke="#c9c9c9" stroke-width="1"/><circle cx="6.5" cy="4.5" r="2" fill="#c9c9c9"/></svg>
<svg style="left:1565px;top:150px;" width="6" height="6" viewBox="0 0 6 6"><path d="M0 0 H6 V6 Z" fill="#d8d8d8"/></svg>
<svg style="left:0px;top:0px" width="1577" height="1040" viewBox="0 0 1577 1040"><g transform="translate(1406.5,152.5)"><rect x="5.5" y="6.5" width="20" height="21" fill="#5ec4ef"/><rect x="5.5" y="12.8" width="20" height="7.6" fill="#7f8cce"/><rect x="11.5" y="6.5" width="7.6" height="21" fill="#5266bb"/><rect x="12.2" y="13.5" width="6.2" height="6.2" fill="#3fb2ea"/><path d="M5.50 6.50V12.29M5.50 6.50H11.02M6.19 7.22V12.29M6.19 7.22H11.02M6.88 7.95V12.29M6.88 7.95H11.02M7.57 8.67V12.29M7.57 8.67H11.02M8.26 9.40V12.29M8.26 9.40H11.02M8.95 10.12V12.29M8.95 10.12H11.02M9.64 10.84V12.29M9.64 10.84H11.02M10.33 11.57V12.29M10.33 11.57H11.02M5.50 13.02H8.95M10.33 13.02H11.71M5.50 13.02V13.74M8.95 13.02V13.74M5.50 13.74H11.71M5.50 14.47H11.71M5.50 14.47V15.19M8.95 14.47V15.19M5.50 15.19H11.02M11.71 15.19V15.91M5.50 15.91H11.71M5.50 16.64H11.71M5.50 16.64V17.36M11.71 16.64V17.36M5.50 17.36H11.71M5.50 18.09H7.57M8.95 18.09H11.71M5.50 18.09V18.81M11.71 18.09V18.81M5.50 18.81H11.71M11.71 19.53V20.26M5.50 20.26H11.71M5.50 20.26V20.98M5.50 20.98H12.40M5.50 21.71V27.50M5.50 27.50H11.02M6.19 21.71V26.78M6.19 26.78H11.02M6.88 21.71V26.05M6.88 26.05H11.02M7.57 21.71V25.33M7.57 25.33H11.02M8.26 21.71V24.60M8.26 24.60H11.02M8.95 21.71V23.88M8.95 23.88H11.02M9.64 21.71V23.16M9.64 23.16H11.02M10.33 21.71V22.43M10.33 22.43H11.02M11.71 20.98V22.43M12.40 20.98V27.50M11.71 23.88H12.40M11.71 23.88V27.50M11.71 27.50H12.40M11.71 6.50H12.40M11.71 6.50V13.74M12.40 6.50V13.02M12.40 13.02H13.09M13.78 6.50H14.47M13.78 6.50V13.02M13.78 13.02H14.47M14.47 6.50V8.67M14.47 10.12V13.02M15.16 6.50H15.84M15.16 6.50V13.02M15.84 6.50V13.02M15.16 13.02H15.84M16.53 6.50V13.02M16.53 13.02H17.22M17.22 6.50V12.29M17.22 6.50H17.91M17.91 6.50V13.02M17.22 10.12H17.91M18.60 6.50V13.02M18.60 6.50H19.29M19.29 6.50V10.12M18.60 10.12H19.29M19.29 11.57V13.02M18.60 13.02H25.50M19.98 6.50H25.50M25.50 6.50V12.29M19.98 7.22H24.81M24.81 7.22V12.29M19.98 7.95H24.12M24.12 7.95V12.29M19.98 8.67H23.43M23.43 8.67V12.29M19.98 9.40H22.74M22.74 9.40V12.29M19.98 10.12H22.05M22.05 10.12V12.29M19.98 10.84H21.36M21.36 10.84V12.29M19.98 11.57H20.67M20.67 11.57V12.29M25.50 13.02V13.74M19.29 13.74H25.50M19.29 13.74V14.47M12.40 13.74H13.09M12.40 13.74V14.47M13.78 13.74H14.47M13.78 13.74V14.47M15.16 13.74V14.47M15.84 13.74V14.47M16.53 13.74H17.22M17.22 13.74V14.47M17.91 13.74H18.60M18.60 13.74V14.47M13.09 14.47H13.78M13.09 14.47V15.19M12.40 15.19H13.09M12.40 15.19V15.91M14.47 14.47H15.16M14.47 14.47V15.19M13.78 15.19H14.47M13.78 15.19V15.91M13.09 15.91H13.78M13.09 15.91V16.64M12.40 16.64H13.09M15.16 15.19V15.91M14.47 15.91H15.16M14.47 15.91V16.64M13.78 16.64H14.47M15.84 14.47H16.53M16.53 14.47V15.19M16.53 15.19H17.22M17.22 15.19V15.91M17.22 15.91H17.91M17.91 15.91V16.64M17.91 16.64H18.60M17.22 14.47H17.91M17.91 14.47V15.19M17.91 15.19H18.60M18.60 15.19V15.91M15.84 15.19V15.91M15.84 15.91H16.53M16.53 15.91V16.64M16.53 16.64H17.22M12.40 17.36H13.09M13.09 17.36V18.09M13.09 18.09H13.78M13.78 18.09V18.81M13.78 18.81H14.47M14.47 18.81V19.53M14.47 19.53H15.16M15.16 19.53V20.26M13.78 17.36H14.47M14.47 17.36V18.09M14.47 18.09H15.16M15.16 18.09V18.81M12.40 18.09V18.81M12.40 18.81H13.09M13.09 18.81V19.53M13.09 19.53H13.78M13.78 19.53V20.26M13.78 20.26H14.47M12.40 19.53V20.26M12.40 20.26H13.09M16.53 17.36H17.22M16.53 17.36V18.09M15.84 18.09H16.53M15.84 18.09V18.81M17.91 17.36H18.60M17.91 17.36V18.09M17.22 18.09H17.91M17.22 18.09V18.81M16.53 18.81H17.22M16.53 18.81V19.53M15.84 19.53H16.53M15.84 19.53V20.26M18.60 18.09V18.81M17.91 18.81H18.60M17.91 18.81V19.53M17.22 19.53H17.91M17.22 19.53V20.26M16.53 20.26H17.22M18.60 19.53V20.26M17.91 20.26H18.60M19.29 15.19H25.50M19.29 15.19V15.91M25.50 15.19V15.91M19.29 15.91H22.05M23.43 15.91H25.50M19.29 16.64H25.50M19.29 16.64V17.36M25.50 16.64V17.36M19.29 17.36H25.50M19.29 18.09H25.50M19.29 18.09V18.81M19.98 18.81H25.50M22.05 18.81V19.53M25.50 18.81V19.53M19.29 19.53H25.50M13.09 20.98V27.50M13.09 27.50H13.78M13.78 21.71V27.50M13.78 20.98H14.47M14.47 20.98V27.50M15.16 20.98V27.50M15.16 20.98H15.84M15.84 20.98V27.50M15.16 27.50H15.84M16.53 20.98V23.88M16.53 25.33V27.50M16.53 20.98H17.22M17.22 20.98V27.50M16.53 27.50H17.22M17.91 20.98H18.60M18.60 20.98V27.50M18.60 27.50H19.29M19.29 20.26V27.50M19.29 20.26H25.50M22.05 20.26V20.98M22.05 20.98H25.50M25.50 20.26V20.98M19.29 20.98H20.67M25.50 21.71V27.50M19.98 27.50H25.50M24.81 21.71V26.78M19.98 26.78H24.81M24.12 21.71V26.05M19.98 26.05H24.12M23.43 21.71V25.33M19.98 25.33H23.43M22.74 21.71V24.60M19.98 24.60H22.74M22.05 21.71V23.88M19.98 23.88H22.05M21.36 21.71V23.16M19.98 23.16H21.36M20.67 21.71V22.43M19.98 22.43H20.67M5.50 19.53H11.02M13.09 6.50V12.29M19.98 14.47H25.50M17.91 21.71V27.50" stroke="#ffffff" stroke-width="0.42" fill="none"/></g><g transform="translate(1406.5,185.5)"><rect x="0" y="0" width="27" height="27" fill="#2ea3e3"/><path d="M0.00 7.36V9.82M0.00 12.27V14.73M0.00 17.18V19.64M0.00 22.09V24.55M0.00 27.00H2.45M0.00 0.00V2.45M2.45 0.00H4.91M7.36 0.00H9.82M12.27 0.00H14.73M17.18 0.00H19.64M24.55 0.00H27.00M27.00 2.45V4.91M2.45 2.45H4.91M2.45 2.45V4.91M7.36 2.45H9.82M7.36 2.45V4.91M12.27 2.45V4.91M14.73 2.45V4.91M17.18 2.45H19.64M19.64 2.45V4.91M22.09 2.45H24.55M24.55 2.45V4.91M4.91 4.91H7.36M4.91 4.91V7.36M2.45 7.36H4.91M2.45 7.36V9.82M9.82 4.91H12.27M9.82 4.91V7.36M7.36 7.36H9.82M7.36 7.36V9.82M4.91 9.82H7.36M4.91 9.82V12.27M2.45 12.27H4.91M12.27 7.36V9.82M9.82 9.82H12.27M9.82 9.82V12.27M7.36 12.27H9.82M14.73 4.91H17.18M17.18 4.91V7.36M17.18 7.36H19.64M19.64 7.36V9.82M19.64 9.82H22.09M22.09 9.82V12.27M22.09 12.27H24.55M19.64 4.91H22.09M22.09 4.91V7.36M22.09 7.36H24.55M24.55 7.36V9.82M14.73 7.36V9.82M14.73 9.82H17.18M17.18 9.82V12.27M17.18 12.27H19.64M2.45 14.73H4.91M4.91 14.73V17.18M4.91 17.18H7.36M7.36 17.18V19.64M7.36 19.64H9.82M9.82 19.64V22.09M9.82 22.09H12.27M12.27 22.09V24.55M7.36 14.73H9.82M9.82 14.73V17.18M9.82 17.18H12.27M12.27 17.18V19.64M2.45 17.18V19.64M2.45 19.64H4.91M4.91 19.64V22.09M4.91 22.09H7.36M7.36 22.09V24.55M7.36 24.55H9.82M2.45 22.09V24.55M2.45 24.55H4.91M17.18 14.73H19.64M17.18 14.73V17.18M14.73 17.18H17.18M14.73 17.18V19.64M22.09 14.73H24.55M22.09 14.73V17.18M19.64 17.18H22.09M19.64 17.18V19.64M17.18 19.64H19.64M17.18 19.64V22.09M14.73 22.09H17.18M14.73 22.09V24.55M24.55 17.18V19.64M22.09 19.64H24.55M22.09 19.64V22.09M19.64 22.09H22.09M19.64 22.09V24.55M17.18 24.55H19.64M24.55 22.09V24.55M22.09 24.55H24.55M27.00 7.36V9.82M27.00 12.27V14.73M27.00 17.18V19.64M7.36 27.00H9.82M12.27 27.00H14.73M17.18 27.00H19.64M22.09 27.00H24.55M27.00 24.55V27.00" stroke="#ffffff" stroke-width="1.4" fill="none"/><rect x="11" y="11" width="5" height="5" fill="#fff"/></g><g transform="translate(1406.5,218.5)"><rect x="1" y="2" width="6.5" height="6.5" fill="#a9d9f2"/><rect x="19.5" y="2" width="6.5" height="6.5" fill="#a9d9f2"/><rect x="1" y="19" width="6.5" height="7" fill="#62b9ea"/><rect x="19.5" y="19" width="6.5" height="7" fill="#3da6e4"/></g><g transform="translate(1406.5,251.5)"><rect x="0" y="2.5" width="27" height="22.5" fill="#2b78c8"/><path d="M0.00 2.50H2.45M0.00 2.50V25.00M2.45 2.50V25.00M2.45 25.00H4.91M7.36 2.50H9.82M7.36 2.50V25.00M7.36 25.00H9.82M9.82 2.50V10.00M9.82 15.00V25.00M12.27 2.50H14.73M12.27 2.50V25.00M14.73 2.50V25.00M12.27 25.00H14.73M17.18 2.50V25.00M17.18 25.00H19.64M19.64 2.50V22.50M19.64 2.50H22.09M22.09 2.50V25.00M19.64 15.00H22.09M24.55 2.50V25.00M24.55 2.50H27.00M27.00 2.50V15.00M24.55 15.00H27.00M27.00 20.00V25.00M24.55 25.00H27.00M4.91 2.50V22.50" stroke="#ffffff" stroke-width="1.1" fill="none"/></g><g transform="translate(1406.5,284.5)"><rect x="2.5" y="0" width="22" height="27" fill="#2b78c8"/><path d="M2.50 0.00H14.72M19.61 0.00H24.50M2.50 0.00V2.45M14.72 0.00V2.45M2.50 2.45H24.50M2.50 4.91H24.50M2.50 4.91V7.36M14.72 4.91V7.36M2.50 7.36H22.06M24.50 7.36V9.82M2.50 9.82H24.50M2.50 12.27H24.50M2.50 12.27V14.73M24.50 12.27V14.73M2.50 14.73H24.50M2.50 17.18H9.83M14.72 17.18H24.50M2.50 17.18V19.64M24.50 17.18V19.64M2.50 19.64H24.50M24.50 22.09V24.55M2.50 24.55H24.50M2.50 24.55V27.00M2.50 27.00H24.50M24.50 0.00V2.45M2.50 22.09H22.06" stroke="#ffffff" stroke-width="1.1" fill="none"/></g><g transform="translate(1406.5,317.5)"><rect x="0" y="2.5" width="27" height="22.5" fill="#2b78c8"/><path d="M0.00 2.50H2.45M0.00 2.50V7.50M2.45 2.50V25.00M0.00 12.50H2.45M0.00 12.50V25.00M0.00 25.00H2.45M4.91 2.50V25.00M4.91 25.00H7.36M7.36 5.00V25.00M7.36 2.50H9.82M9.82 2.50V25.00M12.27 2.50V25.00M12.27 2.50H14.73M14.73 2.50V25.00M12.27 25.00H14.73M17.18 2.50V12.50M17.18 17.50V25.00M17.18 2.50H19.64M19.64 2.50V25.00M17.18 25.00H19.64M22.09 2.50H24.55M24.55 2.50V25.00M24.55 25.00H27.00M27.00 2.50V25.00M22.09 5.00V25.00" stroke="#ffffff" stroke-width="1.1" fill="none"/></g><g transform="translate(1406.5,350.5)"><rect x="2.5" y="0" width="22" height="27" fill="#2b78c8"/><path d="M2.50 0.00H24.50M24.50 0.00V2.45M2.50 2.45H24.50M2.50 2.45V4.91M2.50 7.36H24.50M2.50 7.36V9.82M24.50 7.36V9.82M2.50 9.82H12.28M17.17 9.82H24.50M2.50 12.27H24.50M2.50 12.27V14.73M24.50 12.27V14.73M2.50 14.73H24.50M2.50 17.18H24.50M2.50 17.18V19.64M4.94 19.64H24.50M12.28 19.64V22.09M24.50 19.64V22.09M2.50 22.09H24.50M2.50 24.55V27.00M2.50 24.55H24.50M12.28 24.55V27.00M12.28 27.00H24.50M24.50 24.55V27.00M2.50 27.00H7.39M4.94 4.91H24.50" stroke="#ffffff" stroke-width="1.1" fill="none"/></g><g transform="translate(1406.5,416.5)"><rect x="3" y="0.5" width="21" height="26" fill="#c2bbb8"/><rect x="6" y="2" width="15" height="1.6" fill="#5a4c48"/><rect x="4" y="24" width="19" height="2.5" fill="#8a7f7b"/><rect x="9" y="5" width="0.9" height="17" fill="#8d8482"/><rect x="13" y="5" width="0.9" height="17" fill="#8d8482"/><rect x="16" y="5" width="0.9" height="17" fill="#8d8482"/><rect x="19" y="5" width="0.9" height="17" fill="#8d8482"/><rect x="4.5" y="8" width="18" height="0.8" fill="#9a918e"/><rect x="4.5" y="12" width="18" height="0.8" fill="#9a918e"/><rect x="4.5" y="16" width="18" height="0.8" fill="#9a918e"/><rect x="4.5" y="20" width="18" height="0.8" fill="#9a918e"/><rect x="12" y="6" width="2" height="8" fill="#5e5250"/><rect x="15" y="14" width="2" height="6" fill="#6e6260"/></g></svg>
<div style="left:43px;top:1004px;width:14px;height:14px;border-radius:7px;background:#bdbdbd;"></div>
<div class="t" style="left:46.5px;top:1005px;font-size:11.5px;color:#535353;font-weight:700">?</div>
<div class="t" style="left:68px;top:1006px;font-size:11.1px;color:#d8d8d8;">Select the 'Question mark' icon to learn how to use the tool.</div>
<div style="left:41px;top:1025px;width:68px;height:20px;border:1px solid #474747;border-radius:3px;"></div>
<div style="left:42px;top:1026px;width:50px;height:19px;background:#454545;"></div>
<div class="t" style="left:45px;top:1029px;font-size:11.2px;color:#e6e6e6;">66,67%</div>
<svg style="left:96.0px;top:1031px;" width="10" height="7" viewBox="0 0 10 7"><path d="M1 1.5 L5 4.9 L9 1.5" fill="none" stroke="#cfcfcf" stroke-width="1.2"/></svg>
<div style="left:114px;top:1025px;width:69px;height:20px;border:1px solid #474747;border-radius:3px;"></div>
<div style="left:115px;top:1026px;width:51px;height:19px;background:#454545;"></div>
<div class="t" style="left:118px;top:1029px;font-size:11.2px;color:#e6e6e6;">0°</div>
<svg style="left:170.0px;top:1031px;" width="10" height="7" viewBox="0 0 10 7"><path d="M1 1.5 L5 4.9 L9 1.5" fill="none" stroke="#cfcfcf" stroke-width="1.2"/></svg>
<div style="left:224px;top:1025px;width:59px;height:20px;border:1px solid #474747;border-radius:3px;"></div>
<div style="left:225px;top:1026px;width:41px;height:19px;background:#454545;"></div>
<div class="t" style="left:228px;top:1029px;font-size:11.2px;color:#e6e6e6;">1</div>
<svg style="left:270.0px;top:1031px;" width="10" height="7" viewBox="0 0 10 7"><path d="M1 1.5 L5 4.9 L9 1.5" fill="none" stroke="#cfcfcf" stroke-width="1.2"/></svg>
<svg style="left:190px;top:1026px;" width="30" height="14" viewBox="0 0 30 14"><path d="M2 2 V12" stroke="#777" stroke-width="1.6"/><path d="M10 2 L4 7 L10 12 Z" fill="#777"/><path d="M25 2 L19 7 L25 12 Z" fill="#777"/></svg>
<svg style="left:290px;top:1026px;" width="30" height="14" viewBox="0 0 30 14"><path d="M5 2 L11 7 L5 12 Z" fill="#777"/><path d="M19 2 L25 7 L19 12 Z" fill="#777"/><path d="M27.5 2 V12" stroke="#777" stroke-width="1.6"/></svg>
<div class="t" style="left:369px;top:1029px;font-size:10.9px;color:#d8d8d8;">Toggle Direct Selection</div>
<svg style="left:530px;top:1027px;" width="8" height="11" viewBox="0 0 8 11"><path d="M1 1 L7 5.5 L1 10 Z" fill="#cfcfcf"/></svg>
<svg style="left:548px;top:1027px;" width="8" height="11" viewBox="0 0 8 11"><path d="M6 1 L2 5.5 L6 10" fill="none" stroke="#9a9a9a" stroke-width="1.1"/></svg>
<div style="left:888px;top:1026px;width:26px;height:12px;border-radius:6px;background:#5e5e5e;"></div>
<svg style="left:1256px;top:1027px;" width="8" height="11" viewBox="0 0 8 11"><path d="M2 1 L6 5.5 L2 10" fill="none" stroke="#9a9a9a" stroke-width="1.1"/></svg>
<svg style="left:1271px;top:101px;" width="11" height="8" viewBox="0 0 11 8"><path d="M1.5 6.5 L5.5 2.5 L9.5 6.5" fill="none" stroke="#9a9a9a" stroke-width="1.1"/></svg>
<svg style="left:1271px;top:1012px;" width="11" height="8" viewBox="0 0 11 8"><path d="M1.5 1.5 L5.5 5.5 L9.5 1.5" fill="none" stroke="#9a9a9a" stroke-width="1.1"/></svg>
<div style="left:1270px;top:543px;width:12px;height:25px;border-radius:6px;background:#5e5e5e;"></div>
<div class="t" style="left:1333px;top:1026px;font-size:10.8px;color:#d0d0d0;">10 La...</div>
<svg style="left:1384px;top:1024px" width="172" height="16" viewBox="0 0 172 16"><path d="M1.5 3 H12 M3 1.5 V12.5 M1.5 11 H9 M11 1.5 V8" stroke="#c8c8c8" stroke-width="1.2" fill="none"/><path d="M9 8 H14 V14.5 L11.5 12.5 L9 14.5 Z" fill="#c8c8c8"/><g transform="translate(24,0)"><path d="M6 2.5 H1.5 V13 H12 V8.5" fill="none" stroke="#c8c8c8" stroke-width="1.2"/><path d="M6 8.5 L12.5 2 M8.5 1.5 H13 V6" fill="none" stroke="#c8c8c8" stroke-width="1.2"/></g><g transform="translate(50,0)"><circle cx="6" cy="6" r="4.5" fill="none" stroke="#777" stroke-width="1.2"/><path d="M9 9 L13 13" stroke="#777" stroke-width="1.6"/></g><g transform="translate(76,0)"><rect x="1.5" y="1.5" width="8" height="8" fill="none" stroke="#c8c8c8" stroke-width="1.1"/><rect x="4.5" y="4.5" width="8" height="8" fill="none" stroke="#8a8a8a" stroke-width="1.1"/><rect x="4.5" y="4.5" width="5" height="5" fill="#c8c8c8"/></g><g transform="translate(100,0)"><path d="M1.5 1 V5 H5 M3.5 3 L5.5 5 L3.5 7" fill="none" stroke="#c8c8c8" stroke-width="1.2"/><rect x="6.5" y="3.5" width="8.5" height="9.5" fill="none" stroke="#c8c8c8" stroke-width="1.2"/><path d="M10.75 5.5 V11 M8 8.25 H13.5" stroke="#c8c8c8" stroke-width="1.2"/></g><g transform="translate(129,0)"><rect x="1" y="2.5" width="10.5" height="10.5" fill="none" stroke="#c8c8c8" stroke-width="1.2"/><path d="M6.25 5 V10.5 M3.5 7.75 H9" stroke="#c8c8c8" stroke-width="1.2"/></g><g transform="translate(154,0)"><path d="M1 3 H12 M4.5 3 V1.5 H8.5 V3" fill="none" stroke="#c8c8c8" stroke-width="1.2"/><path d="M2.2 4.5 L3 13.5 H10 L10.8 4.5 Z" fill="none" stroke="#c8c8c8" stroke-width="1.2"/><path d="M5 6 V12 M6.5 6 V12 M8 6 V12" stroke="#c8c8c8" stroke-width="0.9"/></g></svg>
</body></html>
